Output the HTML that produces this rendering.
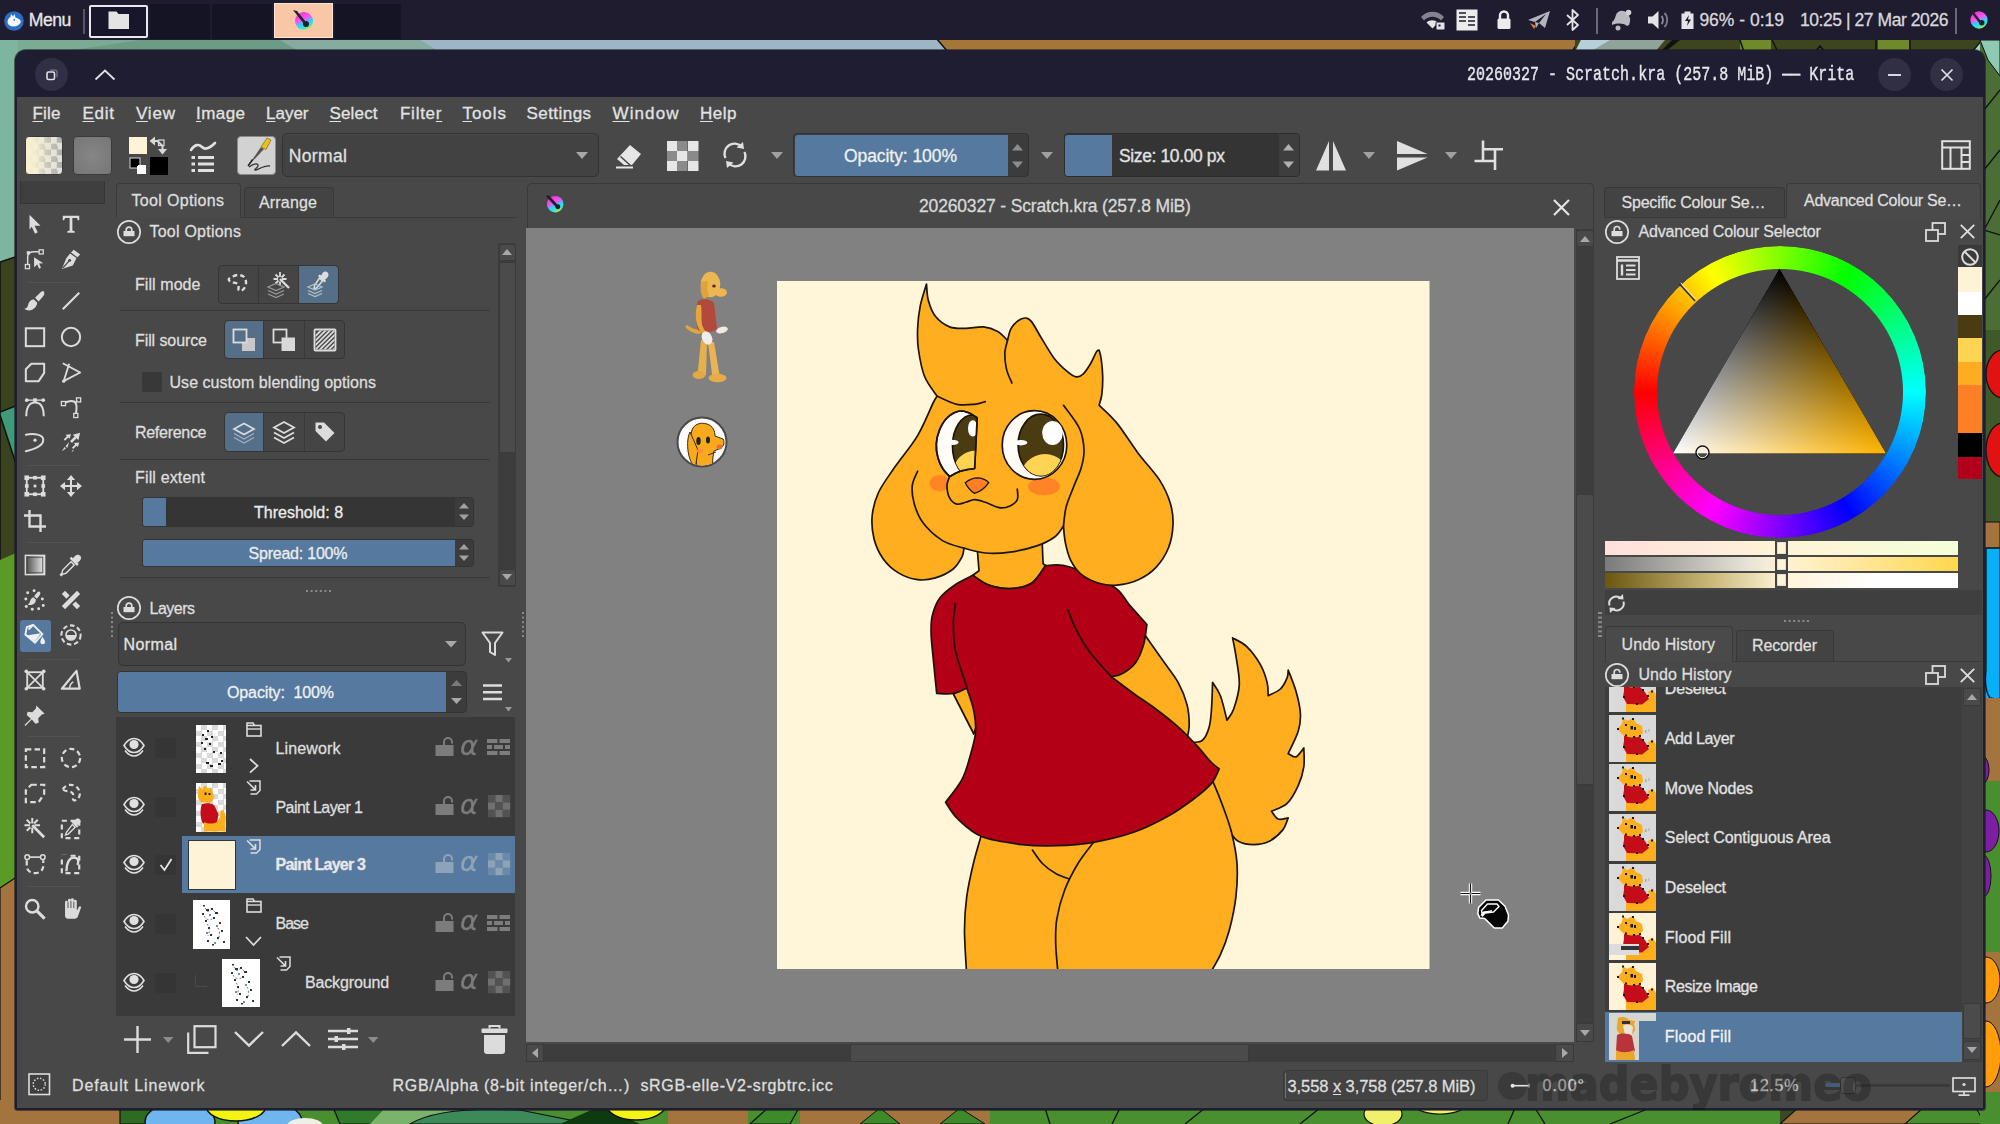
<!DOCTYPE html>
<html lang="en">
<head>
<meta charset="utf-8">
<title>Krita</title>
<style>
*{box-sizing:border-box;margin:0;padding:0}
html,body{width:2000px;height:1124px;overflow:hidden;background:#3c4a22}
body{position:relative;font-family:"Liberation Sans",sans-serif;font-size:16px;color:#dcdcdc;-webkit-font-smoothing:antialiased}
.abs{position:absolute}
.t{position:absolute;white-space:nowrap;line-height:20px;color:#dedede;-webkit-text-stroke:.3px currentColor}
svg{position:absolute;overflow:visible}
#panel{position:absolute;left:0;top:0;width:2000px;height:40px;background:#1e1c2e}
#win{position:absolute;left:15px;top:50px;width:1970px;height:1060px;background:#484848;border-radius:11px 11px 3px 3px;overflow:hidden;box-shadow:0 0 0 1px rgba(20,20,30,.55)}
#titlebar{position:absolute;left:0;top:0;width:100%;height:47px;background:#1e1d31}
.btn{position:absolute;border-radius:3px}
.sep{position:absolute;height:1px;background:#3a3a3a}
.sel{background:#56799f}
</style>
</head>
<body>
<!-- desktop wallpaper -->
<svg id="wall" width="2000" height="1124" viewBox="0 0 2000 1124" style="left:0;top:0">
  <rect x="0" y="0" width="2000" height="1124" fill="#3c4a22"/>
  <!-- top strip -->
  <rect x="0" y="38" width="430" height="14" fill="#7aab93"/>
  <polygon points="60,52 140,40 300,40 430,52" fill="#6d9c86"/>
  <rect x="420" y="38" width="525" height="14" fill="#9db5c5"/>
  <polygon points="280,40 420,40 440,52 300,52" fill="#86ac9f"/>
  <polygon points="936,38 1580,38 1572,52 948,52" fill="#a47638" stroke="#111" stroke-width="1.5"/>
  <rect x="1575" y="38" width="425" height="14" fill="#3d451f"/>
  <polygon points="1575,52 1581,40 1665,40 1655,52" fill="#8fa39a"/>
  <polygon points="1575,52 1581,40 1610,40 1590,52" fill="#b5d0d8"/>
  <polygon points="1660,52 1672,40 1680,40 1665,52" fill="#111"/>
  <rect x="1740" y="38" width="31" height="14" fill="#6f8a2a"/>
  <rect x="1878" y="38" width="31" height="14" fill="#6f8a2a"/>
  <path d="M1740 40l4 12M1772 40l6 12M1815 52l5-6 5 6M1876 40v12M1910 40v12" stroke="#111" stroke-width="1.500" fill="none"/>
  <polygon points="1972,52 1982,40 2000,40 2000,52" fill="#9fd6c8" stroke="#111" stroke-width="1.200"/>
  <!-- left strip -->
  <rect x="0" y="40" width="18" height="225" fill="#7eb5a0"/>
  <polygon points="0,262 18,256 18,560 0,568" fill="#3a431f" stroke="#111" stroke-width="1.5"/>
  <polygon points="0,412 18,405 18,470 0,415" fill="#3f9a78" stroke="#111" stroke-width="1.5"/>
  <polygon points="0,560 18,552 18,878 0,890" fill="#5a9b27"/>
  <polygon points="0,888 18,876 18,1124 0,1124" fill="#a3743e" stroke="#111" stroke-width="1.2"/>
  <!-- bottom strip -->
  <rect x="0" y="1100" width="125" height="24" fill="#a3743e"/>
  <rect x="120" y="1100" width="1660" height="24" fill="#4a8f2f"/>
  <polygon points="120,1100 165,1100 185,1124 120,1124" fill="#2d6b22" stroke="#111" stroke-width="1.2"/>
  <ellipse cx="180" cy="1122" rx="35" ry="20" fill="#6fb5f0" stroke="#111" stroke-width="1.5"/>
  <ellipse cx="270" cy="1122" rx="32" ry="20" fill="#6fb5f0" stroke="#111" stroke-width="1.5"/>
  <ellipse cx="236" cy="1106" rx="30" ry="15" fill="#f4f414" stroke="#111" stroke-width="1.5"/>
  <ellipse cx="305" cy="1126" rx="18" ry="8" fill="#eef0e6"/>
  <polygon points="330,1100 420,1100 470,1124 340,1124" fill="#2f7a2b" stroke="#111" stroke-width="1.2"/>
  <polygon points="370,1124 385,1108 470,1108 500,1124" fill="#7ab36b"/>
  <path d="M410 1124 Q440 1106 520 1110 L590 1124Z" fill="#3c8a58" stroke="#111" stroke-width="1.2"/>
  <polygon points="560,1124 600,1106 640,1124" fill="#0e3a10"/>
  <ellipse cx="636" cy="1104" rx="30" ry="16" fill="#f4f414" stroke="#111" stroke-width="1.5"/>
  <rect x="668" y="1108" width="80" height="16" fill="#a3743e"/>
  <polygon points="750,1124 770,1106 800,1106 790,1124" fill="#3d8a2a" stroke="#111" stroke-width="1.2"/>
  <rect x="800" y="1108" width="200" height="16" fill="#a3743e"/>
  <polygon points="860,1124 880,1108 900,1124" fill="#3d8a2a" stroke="#111"/>
  <polygon points="940,1124 960,1108 985,1124" fill="#3d8a2a" stroke="#111"/>
  <rect x="990" y="1108" width="790" height="16" fill="#4a8f2f"/>
  <g stroke="#111" stroke-width="1.3" fill="none">
    <path d="M1045 1108 L1050 1124M1120 1108 L1112 1124M1205 1108 L1185 1124M1300 1124 L1320 1108M1508 1124 L1515 1108M1535 1108 L1545 1124M1610 1124 L1650 1108"/>
  </g>
  <ellipse cx="1383" cy="1114" rx="19" ry="12" fill="#f0f06a" stroke="#111" stroke-width="1.2"/>
  <ellipse cx="1440" cy="1106" rx="24" ry="8" fill="#f0f06a" stroke="#111" stroke-width="1.2"/>
  <polygon points="1780,1124 1800,1106 2000,1106 2000,1124" fill="#a3743e" stroke="#111" stroke-width="1.2"/>
  <polygon points="1905,1124 1925,1106 1975,1106 1985,1124" fill="#4a8f2f" stroke="#111" stroke-width="1.2"/>
  <!-- right strip -->
  <rect x="1980" y="40" width="20" height="300" fill="#4a6e35"/>
  <polygon points="1980,40 2000,40 2000,76 1988,60" fill="#8fc9b4" stroke="#111"/>
  <g stroke="#111" stroke-width="1.3" fill="none"><path d="M1984 110 L2000 90M1984 170 L2000 150M2000 200 L1984 230 L2000 235M1984 300 L2000 280"/></g>
  <rect x="1980" y="330" width="20" height="200" fill="#3f5a28"/>
  <ellipse cx="2003" cy="374" rx="17" ry="24" fill="#e01212" stroke="#111" stroke-width="1.3"/>
  <ellipse cx="2003" cy="450" rx="17" ry="27" fill="#e01212" stroke="#111" stroke-width="1.3"/>
  <rect x="1980" y="522" width="20" height="30" fill="#a3743e" stroke="#111"/>
  <rect x="1980" y="548" width="20" height="150" fill="#08b0f8"/>
  <path d="M1986 548 L2000 548 L2000 700 L1990 698 Q1984 690 1986 670Z" fill="#08b0f8" stroke="#111" stroke-width="1.3"/>
  <rect x="1980" y="698" width="20" height="85" fill="#a3743e"/>
  <rect x="1980" y="781" width="20" height="175" fill="#4a8f2f"/>
  <ellipse cx="1982" cy="770" rx="7" ry="14" fill="#7d1fa0" stroke="#111"/>
  <ellipse cx="1986" cy="831" rx="13" ry="21" fill="#7d1fa0" stroke="#111"/>
  <ellipse cx="1983" cy="876" rx="8" ry="21" fill="#7d1fa0" stroke="#111"/>
  <rect x="1980" y="952" width="20" height="142" fill="#a3743e"/>
  <ellipse cx="1986" cy="980" rx="14" ry="23" fill="#ff9d0a" stroke="#111"/>
  <ellipse cx="1986" cy="1054" rx="15" ry="33" fill="#ff9d0a" stroke="#111"/>
  <rect x="1980" y="1092" width="20" height="32" fill="#4a8f2f"/>
</svg>
<!-- top desktop panel -->
<div id="panel">
  <svg width="22" height="22" viewBox="0 0 22 22" style="left:3.400px;top:9.500px">
    <circle cx="11" cy="11" r="9.800" fill="#2b6cc4"/>
    <path d="M4.500 12.500c0-3 1.500-5 3-5.500l.5-3 2 2.500c.5-.8 1-1.800 1.500-2.500l1 3.500c3 .5 5 2.500 5.500 4.500-1.500 3-4.500 4.500-7.500 4.500s-5.500-1.500-6-4z" fill="#f6f8fc"/>
    <circle cx="11.300" cy="9.800" r=".9" fill="#2b6cc4"/>
  </svg>
  <div class="t" style="left:28.8px;top:10.3px;font-size:17.6px;letter-spacing:-0.54px;line-height:20px;color:#e6e6ea;">Menu</div>
  <div class="abs" style="left:82.500px;top:9px;width:2px;height:25px;background:#55546a"></div>
  <div class="abs" style="left:89px;top:5px;width:59px;height:33px;border:2px solid #e8e8ee;background:#17162a;border-radius:2px"></div>
  <svg width="22" height="20" viewBox="0 0 22 20" style="left:108px;top:10px"><path d="M0.5 1.5h8l2 2.5h10.5v15h-20.500z" fill="#e4e4e4"/></svg>
  <div class="abs" style="left:150px;top:4px;width:60px;height:35px;background:#151425"></div>
  <div class="abs" style="left:212px;top:4px;width:60px;height:35px;background:#151425"></div>
  <div class="abs" style="left:274px;top:3px;width:59px;height:35px;background:#f9c6a6;border:1px solid #fde6d8"></div>
  <div class="abs" style="left:335px;top:4px;width:66px;height:35px;background:#151425"></div>
  <svg width="22" height="22" viewBox="0 0 22 22" style="left:292px;top:9px">
    <defs><linearGradient id="kg1" x1="0.300" y1="0" x2="0.750" y2="1"><stop offset="0" stop-color="#ff2ad4"/><stop offset=".42" stop-color="#e860f0"/><stop offset=".6" stop-color="#30d0ff"/><stop offset=".8" stop-color="#30e8d0"/><stop offset="1" stop-color="#f4e020"/></linearGradient></defs>
    <circle cx="12" cy="12" r="9" fill="url(#kg1)"/><circle cx="14" cy="15" r="3" fill="#222"/>
    <path d="M1 1l4 1 9 11-2 2z" fill="#2a2233"/>
  </svg>
  <!-- tray -->
  <svg width="26" height="22" viewBox="0 0 26 22" style="left:1420px;top:9px">
    <path d="M1 8c6-7 17-7 23 0l-3 3.500c-5-5-12-5-17 0z" fill="#84838f"/>
    <path d="M6.500 13.500c3-3 8-3 11.500 0l-5.500 6z" fill="#e4e4e8"/>
    <rect x="16" y="13" width="9" height="8" rx="1" fill="#e4e4e8" stroke="#1b1a2e" stroke-width="1"/><rect x="18.500" y="15.500" width="2" height="2" fill="#1b1a2e"/>
  </svg>
  <svg width="22" height="22" viewBox="0 0 22 22" style="left:1456px;top:9px">
    <rect x="0.500" y="0.500" width="21" height="21" fill="#ececec"/>
    <path d="M3 4h7M3 8h7M3 12h7M12 8h7M12 12h7M12 16h7" stroke="#1b1a2e" stroke-width="1.600"/>
  </svg>
  <svg width="16" height="20" viewBox="0 0 16 20" style="left:1496px;top:10px">
    <path d="M4 9v-3.500a4 4 0 0 1 8 0v3.500" fill="none" stroke="#ececec" stroke-width="2.400"/><rect x="1.500" y="8.500" width="13" height="10.500" rx="1.500" fill="#ececec"/>
  </svg>
  <svg width="24" height="20" viewBox="0 0 24 20" style="left:1527px;top:10px">
    <path d="M1 10l22-9-5 17-6-5-3 5-1-6z" fill="#b4b4bc"/><path d="M8 12l11-8-7 9z" fill="#1b1a2e"/><path d="M3 13l6 3-2 3z" fill="#e07a3a"/>
  </svg>
  <svg width="16" height="22" viewBox="0 0 16 22" style="left:1565px;top:9px">
    <path d="M2 6l11 10-5.500 5v-20l5.500 5-11 10" fill="none" stroke="#e4e4e8" stroke-width="1.800" stroke-linejoin="round"/>
  </svg>
  <div class="abs" style="left:1596px;top:8px;width:2px;height:26px;background:#6a697a"></div>
  <svg width="24" height="22" viewBox="0 0 24 22" style="left:1609px;top:9px">
    <path d="M3 13c2-1 3-4 4-7 1-4 7-6 11-2l3-1-1 4c2 3 1 6 0 9l-2 1c-4-3-9-3-15-1z" fill="#b9b9c1"/><circle cx="9" cy="19" r="2.500" fill="#b9b9c1"/><circle cx="19.500" cy="3.500" r="2.800" fill="#d0d0d6"/>
  </svg>
  <svg width="22" height="20" viewBox="0 0 22 20" style="left:1647px;top:10px">
    <path d="M1 6.500h4.500l6-5.500v18l-6-5.500h-4.500z" fill="#e4e4e8"/><path d="M14.500 6c2 2 2 6 0 8" fill="none" stroke="#8d8c99" stroke-width="1.800"/><path d="M17.500 3c3.500 3.500 3.500 10.500 0 14" fill="none" stroke="#7d7c8c" stroke-width="1.800"/>
  </svg>
  <svg width="16" height="20" viewBox="0 0 16 20" style="left:1680px;top:10px">
    <path d="M1.500 3.500h3v-2h6v2h3v15.500h-12z" fill="#e4e4e8"/><path d="M9 5l-4 6h3l-1 5 4-6.500h-3z" fill="#1b1a2e"/>
  </svg>
  <div class="t" style="left:1699.4px;top:10.3px;font-size:17.5px;letter-spacing:0px;line-height:20px;color:#d8d8de;">96% - 0:19</div>
  <div class="t" style="left:1800px;top:10.3px;font-size:17.5px;letter-spacing:-0.44px;line-height:20px;color:#d8d8de;">10:25 | 27 Mar 2026</div>
  <div class="abs" style="left:1955px;top:8px;width:2px;height:26px;background:#6a697a"></div>
  <svg width="20" height="20" viewBox="0 0 22 22" style="left:1969px;top:10px">
    <circle cx="11" cy="11" r="9.500" fill="url(#kg1)"/><circle cx="14" cy="14" r="3" fill="#222"/><path d="M1 1l4 1 8 10-2 2z" fill="#2a2233"/>
  </svg>
</div>
<div id="win">
<div id="titlebar">
  <div class="abs" style="left:20px;top:8px;width:33px;height:33px;border-radius:50%;background:#312f43"></div>
  <svg width="16" height="16" viewBox="0 0 16 16" style="left:29px;top:17px"><rect x="3" y="5" width="7.500" height="7.500" rx="1.500" fill="none" stroke="#e0e0e6" stroke-width="1.600"/><path d="M6 3.200h5.500a1.500 1.500 0 0 1 1.500 1.500v5.500" fill="none" stroke="#77768a" stroke-width="1.300"/></svg>
  <svg width="22" height="12" viewBox="0 0 22 12" style="left:79px;top:19px"><path d="M1.500 10.500l9.500-9 9.500 9" fill="none" stroke="#e0e0e6" stroke-width="1.800"/></svg>
  <div class="t" id="wtitle" style="left:1451.500px;top:11.500px;line-height:26px;font-family:'Liberation Mono',monospace;font-size:21px;font-weight:400;color:#e6e6ec;-webkit-text-stroke:.4px #e6e6ec;transform-origin:0 50%;transform:scaleX(.7147);white-space:pre">20260327 - Scratch.kra (257.8 MiB) —— Krita</div>
  <div class="abs" style="left:1863px;top:8px;width:33px;height:33px;border-radius:50%;background:#312f43"></div>
  <div class="abs" style="left:1873px;top:24px;width:13px;height:2px;background:#d8d8de"></div>
  <div class="abs" style="left:1915px;top:8px;width:33px;height:33px;border-radius:50%;background:#312f43"></div>
  <svg width="14" height="14" viewBox="0 0 14 14" style="left:1925px;top:17.500px"><path d="M1.500 1.500l11 11M12.500 1.500l-11 11" stroke="#e0e0e6" stroke-width="1.700"/></svg>
</div>
<div class="abs" style="left:0;top:47px;width:2px;height:1013px;background:#1e1d31"></div>
<div class="abs" style="right:0;top:47px;width:2px;height:1013px;background:#1e1d31"></div>
<div class="abs" style="left:0;bottom:0;width:100%;height:2px;background:#1e1d31"></div>
<div id="w" class="abs" style="left:-15px;top:-50px;width:2000px;height:1124px">
<div class="t" style="left:32.5px;top:103.5px;font-size:17px;letter-spacing:0.2px;line-height:20px;color:#e2e2e2;text-underline-offset:2px"><u>F</u>ile</div>
<div class="t" style="left:82.5px;top:103.5px;font-size:17px;letter-spacing:0.74px;line-height:20px;color:#e2e2e2;text-underline-offset:2px"><u>E</u>dit</div>
<div class="t" style="left:136px;top:103.5px;font-size:17px;letter-spacing:0.82px;line-height:20px;color:#e2e2e2;text-underline-offset:2px"><u>V</u>iew</div>
<div class="t" style="left:196px;top:103.5px;font-size:17px;letter-spacing:0.44px;line-height:20px;color:#e2e2e2;text-underline-offset:2px"><u>I</u>mage</div>
<div class="t" style="left:266px;top:103.5px;font-size:17px;letter-spacing:-0.01px;line-height:20px;color:#e2e2e2;text-underline-offset:2px"><u>L</u>ayer</div>
<div class="t" style="left:329.5px;top:103.5px;font-size:17px;letter-spacing:0.15px;line-height:20px;color:#e2e2e2;text-underline-offset:2px"><u>S</u>elect</div>
<div class="t" style="left:400px;top:103.5px;font-size:17px;letter-spacing:0.74px;line-height:20px;color:#e2e2e2;text-underline-offset:2px">Filte<u>r</u></div>
<div class="t" style="left:462.5px;top:103.5px;font-size:17px;letter-spacing:0.95px;line-height:20px;color:#e2e2e2;text-underline-offset:2px"><u>T</u>ools</div>
<div class="t" style="left:526.5px;top:103.5px;font-size:17px;letter-spacing:0.44px;line-height:20px;color:#e2e2e2;text-underline-offset:2px">Setti<u>n</u>gs</div>
<div class="t" style="left:612.5px;top:103.5px;font-size:17px;letter-spacing:1.11px;line-height:20px;color:#e2e2e2;text-underline-offset:2px"><u>W</u>indow</div>
<div class="t" style="left:700px;top:103.5px;font-size:17px;letter-spacing:0.51px;line-height:20px;color:#e2e2e2;text-underline-offset:2px"><u>H</u>elp</div>
<div class="abs" style="left:24.5px;top:135.5px;width:38.5px;height:39px;background:#e9e2c8;border-radius:4px;background-image:linear-gradient(90deg,#f8f1d2 0%,rgba(248,241,210,.92) 25%,rgba(248,241,210,.45) 60%,rgba(248,241,210,.12) 100%),repeating-conic-gradient(#a4a4a4 0 25%,#dedede 0 50%);background-size:100% 100%,12.500px 12.500px;border:1px solid #3a3a3a"></div>
<div class="abs" style="left:73px;top:135.5px;width:38.5px;height:39px;background:#7f7f7f;border-radius:4px;border:1px solid #3a3a3a;background-image:radial-gradient(circle at 50% 50%,#868686,#767676)"></div>
<div class="abs" style="left:149.5px;top:156.5px;width:18px;height:18px;background:#000;"></div>
<div class="abs" style="left:128.5px;top:136.5px;width:18px;height:17.5px;background:#fff3d7;"></div>
<svg width="18" height="18" viewBox="0 0 18 18" style="left:129px;top:157px;"><rect x="1" y="1" width="10" height="10" fill="#000" stroke="#d8d8d8" stroke-width="1"/><rect x="8" y="8" width="9" height="9" fill="#fff"/><rect x="2" y="2" width="7" height="7" fill="#000"/></svg>
<svg width="19" height="19" viewBox="0 0 19 19" style="left:149px;top:136px;"><path d="M0.500 5l5.500-4.500v9z" fill="#d8d8d8"/><path d="M13.500 18.500l-4.500-5.500h9z" fill="#d8d8d8"/><path d="M5 5h3.500l5 5v3.500" fill="none" stroke="#d8d8d8" stroke-width="2"/><rect x="8" y="5" width="5.500" height="5.500" fill="none" stroke="#d8d8d8" stroke-width="1.200" transform="translate(1.500 -1)"/></svg>
<svg width="30" height="34" viewBox="0 0 30 34" style="left:189px;top:139px;"><path d="M2 11c4-6 8-6 11-3s7 2 13-4" fill="none" stroke="#e0e0e0" stroke-width="2.600" stroke-linecap="round"/><path d="M9 18.500h16M9 25h16M9 31.500h16" stroke="#e0e0e0" stroke-width="2.800"/><path d="M2.500 18.500h3.500M2.500 25h3.500M2.500 31.500h3.500" stroke="#e0e0e0" stroke-width="2.800"/></svg>
<div class="abs" style="left:237px;top:135.5px;width:38.5px;height:39px;background:#d2d2d2;border-radius:4px;border:1px solid #8a8a8a"></div>
<svg width="38.5" height="39" viewBox="0 0 38.5 39" style="left:237px;top:135.5px;"><path d="M12 31c4-3 8-4 9-2s-4 4-3 5 9-5 15-4" fill="none" stroke="#333" stroke-width="1.300"/><path d="M11 30l13-19 3 2z" fill="#555"/><path d="M24 11l6-9 4 2-5 9.500z" fill="#e8c21a" stroke="#8a7410" stroke-width=".8"/><path d="M11 30l4.500-6.500" stroke="#222" stroke-width="1.400"/></svg>
<div class="abs" style="left:282px;top:133px;width:316.5px;height:43.5px;background:#424242;border-radius:5px;border:1.500px solid #323232;box-shadow:inset 0 1px 0 rgba(255,255,255,.04)"></div>
<div class="t" style="left:288.7px;top:146.3px;font-size:17.5px;letter-spacing:0.38px;line-height:20px;color:#e0e0e0;">Normal</div>
<svg width="12" height="7" viewBox="0 0 12 7" style="left:576px;top:152px;"><path d="M0 0h12l-6 7z" fill="#a8a8a8"/></svg>
<svg width="30" height="30" viewBox="0 0 30 30" style="left:614px;top:140px;"><path d="M3 19l13-14 11 9-9 11h-8z" fill="#e6e6e6"/><path d="M2 27.500h17" stroke="#e6e6e6" stroke-width="2.200"/><path d="M6.500 16.500l10 9" stroke="#484848" stroke-width="1.600"/></svg>
<svg width="31.5" height="30" viewBox="0 0 31.5 30" style="left:667px;top:140.5px;"><rect x="0" y="0" width="10.500" height="10" fill="#e6e6e6"/><rect x="10" y="0" width="10.500" height="10" fill="#8a8a8a"/><rect x="21" y="0" width="10.500" height="10" fill="#e6e6e6"/><rect x="0" y="10" width="10.500" height="10" fill="#8a8a8a"/><rect x="10" y="10" width="10.500" height="10" fill="#e6e6e6"/><rect x="21" y="10" width="10.500" height="10" fill="#8a8a8a"/><rect x="0" y="20" width="10.500" height="10" fill="#e6e6e6"/><rect x="10" y="20" width="10.500" height="10" fill="#8a8a8a"/><rect x="21" y="20" width="10.500" height="10" fill="#e6e6e6"/></svg>
<svg width="28" height="28" viewBox="0 0 28 28" style="left:721px;top:141px;"><path d="M4.500 17a10 10 0 0 1 16-11.500" fill="none" stroke="#e0e0e0" stroke-width="2.400"/><path d="M23.500 11a10 10 0 0 1-16 11.500" fill="none" stroke="#e0e0e0" stroke-width="2.400"/><path d="M15.500 6.500l7.500 1.500-1-7z" fill="#e0e0e0"/><path d="M12.500 21.500l-7.500-1.500 1 7z" fill="#e0e0e0"/></svg>
<svg width="12" height="7" viewBox="0 0 12 7" style="left:770.5px;top:152px;"><path d="M0 0h12l-6 7z" fill="#a0a0a0"/></svg>
<div class="abs" style="left:793px;top:133px;width:236px;height:43.5px;background:#3c3c3c;border-radius:4px;border:1px solid #333"></div>
<div class="abs" style="left:794.5px;top:134.5px;width:213px;height:41px;background:#56799f;border-radius:3px 0 0 3px"></div>
<div class="t" style="left:844px;top:146.3px;font-size:17.5px;letter-spacing:-0.07px;line-height:20px;color:#f0f0f0;">Opacity: 100%</div>
<svg width="11" height="24" viewBox="0 0 11 24" style="left:1012px;top:144px;"><path d="M0 6.500l5.500-6.500 5.500 6.500zM0 17.500l5.500 6.500 5.500-6.500z" fill="#8c8c8c"/></svg>
<svg width="12" height="7" viewBox="0 0 12 7" style="left:1041px;top:152px;"><path d="M0 0h12l-6 7z" fill="#a0a0a0"/></svg>
<div class="abs" style="left:1063.5px;top:133px;width:236.5px;height:43.5px;background:#343434;border-radius:4px;border:1px solid #2e2e2e"></div>
<div class="abs" style="left:1065px;top:134.5px;width:46.5px;height:41px;background:#56799f;border-radius:3px 0 0 3px"></div>
<div class="abs" style="left:1279px;top:134px;width:20px;height:41.5px;background:#3e3e3e;border-radius:0 3px 3px 0"></div>
<div class="t" style="left:1119px;top:146.3px;font-size:17.5px;letter-spacing:-0.38px;line-height:20px;color:#e4e4e4;">Size: 10.00 px</div>
<svg width="11" height="24" viewBox="0 0 11 24" style="left:1283px;top:144px;"><path d="M0 6.500l5.500-6.500 5.500 6.500zM0 17.500l5.500 6.500 5.500-6.500z" fill="#b0b0b0"/></svg>
<svg width="30" height="29.5" viewBox="0 0 30 29.5" style="left:1316px;top:140.5px;"><path d="M13 0v29.500h-13zM17 0v29.500h13z" fill="#e0e0e0"/></svg>
<svg width="12" height="7" viewBox="0 0 12 7" style="left:1363px;top:152px;"><path d="M0 0h12l-6 7z" fill="#a0a0a0"/></svg>
<svg width="30.5" height="29.5" viewBox="0 0 30.5 29.5" style="left:1397px;top:140.5px;"><path d="M0 0l30.500 13h-30.500zM0 29.500l30.500-13h-30.500z" fill="#e0e0e0"/></svg>
<svg width="12" height="7" viewBox="0 0 12 7" style="left:1445px;top:152px;"><path d="M0 0h12l-6 7z" fill="#a0a0a0"/></svg>
<svg width="2000" height="200" viewBox="0 0 2000 200" style="left:0;top:0"><path d="M1483 140.500V162.300M1474.500 161H1496.300M1483 149.300H1503M1495 149.300V170" fill="none" stroke="#e0e0e0" stroke-width="2.600"/></svg>
<svg width="30" height="30" viewBox="0 0 30 30" style="left:1941px;top:140px;"><rect x="1.200" y="1.200" width="27.600" height="27.600" fill="none" stroke="#e0e0e0" stroke-width="2"/><path d="M1 7.500h28M9.500 7.500v22M20.500 7.500v22M20.500 15h8.500M20.500 22h8.500" stroke="#e0e0e0" stroke-width="2" fill="none"/></svg>
<div class="abs" style="left:20px;top:181px;width:85px;height:22.5px;background:#3f3f3f;border:1px solid #353535;border-top:none"></div>
<div class="abs" style="left:19.5px;top:619.5px;width:31.5px;height:32px;background:#56799f;border-radius:3px"></div>
<svg width="22" height="22" viewBox="0 0 24 24" style="left:24px;top:212.5px;"><path d="M6 2l12 12h-6.500l3.500 7-3 1.500-3.500-7.500-2.500 3z" fill="#dcdcdc"/></svg>
<svg width="22" height="22" viewBox="0 0 24 24" style="left:59.5px;top:212.5px;"><path d="M3 3h18v5h-1.500l-1-2.500h-5v13.500l2.500 1v1.500h-8v-1.500l2.500-1v-13.500h-5l-1 2.500h-1.500z" fill="#dcdcdc"/></svg>
<svg width="22" height="22" viewBox="0 0 24 24" style="left:24px;top:247.5px;"><path d="M4 20v-10c0-4 3-6 7-6h7" fill="none" stroke="#dcdcdc" stroke-width="1.6"/><rect x="1.500" y="18" width="4.500" height="4.500" fill="#484848" stroke="#dcdcdc" stroke-width="1.400"/><rect x="16.500" y="2" width="4.500" height="4.500" fill="#484848" stroke="#dcdcdc" stroke-width="1.400"/><rect x="3" y="3.500" width="3.500" height="3.500" fill="#dcdcdc"/><path d="M11 10l10 6.500-4.500.5 2 4.500-2 1-2-4.500-3.500 3z" fill="#dcdcdc"/></svg>
<svg width="22" height="22" viewBox="0 0 24 24" style="left:59.5px;top:247.5px;"><path d="M15 2l7 5-3 3-7-5z" fill="#dcdcdc"/><path d="M11 6l7 5-4 8-12 4 5-12z" fill="#dcdcdc"/><path d="M3 22l7-8" stroke="#484848" stroke-width="1.400"/><circle cx="10.500" cy="13.500" r="1.600" fill="#484848"/></svg>
<svg width="22" height="22" viewBox="0 0 24 24" style="left:24px;top:290px;"><path d="M21.500 1.500c1.500 1.500.5 4-1.500 6.500l-4 4.500-4-4 4.500-4.500c2.500-2.500 4-3.500 5-2.500z" fill="#dcdcdc"/><path d="M10.500 10l4 4c-.5 3-2 6-5.500 7.500s-6.500.5-8.500-1c2.500-.5 3.500-2 4-4.500s2.500-5.500 6-6z" fill="#dcdcdc"/></svg>
<svg width="22" height="22" viewBox="0 0 24 24" style="left:59.5px;top:290px;"><path d="M3 21l18-18" fill="none" stroke="#dcdcdc" stroke-width="2.4"/></svg>
<svg width="22" height="22" viewBox="0 0 24 24" style="left:24px;top:325.5px;"><rect x="2" y="2.500" width="20" height="19.500" fill="none" stroke="#dcdcdc" stroke-width="2.2"/></svg>
<svg width="22" height="22" viewBox="0 0 24 24" style="left:59.5px;top:325.5px;"><circle cx="12" cy="12" r="10" fill="none" stroke="#dcdcdc" stroke-width="2.2"/></svg>
<svg width="22" height="22" viewBox="0 0 24 24" style="left:24px;top:361px;"><path d="M8 3h14v10l-6 9h-14v-13z" fill="none" stroke="#dcdcdc" stroke-width="2.2" stroke-linejoin="round"/></svg>
<svg width="22" height="22" viewBox="0 0 24 24" style="left:59.5px;top:361px;"><path d="M3 2.500l19 10-18 9.500 6-19" fill="none" stroke="#dcdcdc" stroke-width="2" stroke-linejoin="round"/><circle cx="4" cy="22" r="1.800" fill="#dcdcdc"/></svg>
<svg width="22" height="22" viewBox="0 0 24 24" style="left:24px;top:396px;"><path d="M2.500 22c0-9 3-15 9.500-15s9.500 6 9.500 15" fill="none" stroke="#dcdcdc" stroke-width="2.2"/><path d="M3 4.500h18" fill="none" stroke="#dcdcdc" stroke-width="1.4"/><circle cx="3" cy="4.500" r="2" fill="#dcdcdc"/><circle cx="21" cy="4.500" r="2" fill="#dcdcdc"/><rect x="10" y="2.500" width="4" height="4" fill="#dcdcdc"/></svg>
<svg width="22" height="22" viewBox="0 0 24 24" style="left:59.5px;top:396px;"><path d="M4 8.500c5-4 12-4 13.500 0s0 6 0 12" fill="none" stroke="#dcdcdc" stroke-width="2.2"/><rect x="1.500" y="6" width="4.500" height="4.500" fill="#484848" stroke="#dcdcdc" stroke-width="1.400"/><rect x="15" y="19" width="4.500" height="4.500" fill="#484848" stroke="#dcdcdc" stroke-width="1.400"/><rect x="18" y="2" width="4.500" height="4.500" fill="#484848" stroke="#dcdcdc" stroke-width="1.400"/><path d="M17 6.500l2-1.500" fill="none" stroke="#dcdcdc" stroke-width="1.2"/></svg>
<svg width="22" height="22" viewBox="0 0 24 24" style="left:24px;top:431px;"><path d="M2 4c9-2 19 0 19 5.500s-8 10-19 12.500" fill="none" stroke="#dcdcdc" stroke-width="2.2" stroke-linecap="round"/><circle cx="12" cy="10" r="1.800" fill="#dcdcdc"/></svg>
<svg width="22" height="22" viewBox="0 0 24 24" style="left:59.5px;top:431px;"><path d="M22 2l-2 8-2-2-5 5-2-2 5-5-2-2z" fill="#dcdcdc"/><path d="M12 3.500l-1.500 5-1.500-1.300-3.500 3.500-1.500-1.500 3.500-3.500-1.300-1.500zM21 12.500l-1.500 5-1.500-1.300-3.500 3.500-1.500-1.500 3.500-3.500-1.300-1.500z" fill="#dcdcdc"/><path d="M10 12l-4 4.500 2 2zM5 17.500l-3 4.500 4.500-3z" fill="#dcdcdc"/><path d="M14 20.500l-1.500 2.500 2.500-1.500z" fill="#dcdcdc"/></svg>
<svg width="22" height="22" viewBox="0 0 24 24" style="left:24px;top:475px;"><rect x="3" y="3" width="18" height="18" fill="none" stroke="#dcdcdc" stroke-width="2"/><g fill="#dcdcdc"><rect x="0.500" y="0.500" width="5" height="5"/><rect x="18.500" y="0.500" width="5" height="5"/><rect x="0.500" y="18.500" width="5" height="5"/><rect x="18.500" y="18.500" width="5" height="5"/><rect x="10" y="1" width="4" height="4"/><rect x="10" y="19" width="4" height="4"/><rect x="1" y="10" width="4" height="4"/><rect x="19" y="10" width="4" height="4"/><rect x="10.500" y="10.500" width="3" height="3"/></g></svg>
<svg width="22" height="22" viewBox="0 0 24 24" style="left:59.5px;top:475px;"><path d="M12 2v20M2 12h20" fill="none" stroke="#dcdcdc" stroke-width="2.2"/><path d="M12 0l4.500 5.500h-9zM12 24l4.500-5.500h-9zM0 12l5.500-4.500v9zM24 12l-5.500-4.500v9z" fill="#dcdcdc"/></svg>
<svg width="22" height="22" viewBox="0 0 24 24" style="left:24px;top:510px;"><path d="M6 0v18h18M0 6h18v18" fill="none" stroke="#dcdcdc" stroke-width="2.6"/></svg>
<svg width="22" height="22" viewBox="0 0 24 24" style="left:24px;top:553.5px;"><defs><linearGradient id="tg" x1="0" x2="1"><stop offset="0" stop-color="#484848"/><stop offset="1" stop-color="#f0f0f0"/></linearGradient></defs><rect x="1.500" y="1.500" width="21" height="21" fill="url(#tg)" stroke="#dcdcdc" stroke-width="1.600"/><rect x="3.500" y="3.500" width="17" height="17" fill="none" stroke="#484848" stroke-width="1"/></svg>
<svg width="22" height="22" viewBox="0 0 24 24" style="left:59.5px;top:553.5px;"><path d="M17 1.500c2-1.500 4.500-.5 5.500 1s.5 3.500-1 5l-2.500 2 1.500 1.500-2 2-8-8 2-2 1.500 1.500z" fill="#dcdcdc"/><path d="M12 8.500l3.500 3.500-9 9-3.500 1-1.500 1.500-1-1 1.500-1.500 1-3.500z" fill="none" stroke="#dcdcdc" stroke-width="1.600"/></svg>
<svg width="22" height="22" viewBox="0 0 24 24" style="left:24px;top:588.5px;"><path d="M17 3c1.500 1 1 2.500-.5 4.500l-2.500 3-3-2.500 2.500-3c1.500-2 2.500-2.500 3.500-2z" fill="#dcdcdc"/><path d="M10 9l3 2.500c0 2.500-1 4.500-3.500 5.500s-4.500.5-5.500-.5c1.500-.5 2-1.500 2.500-3s1.500-4 3.500-4.500z" fill="#dcdcdc"/><g fill="#dcdcdc"><circle cx="4" cy="4" r="1.600"/><circle cx="11" cy="2" r="1.600"/><circle cx="2" cy="11" r="1.600"/><circle cx="20" cy="11" r="1.600"/><circle cx="21" cy="18" r="1.600"/><circle cx="16" cy="21.500" r="1.600"/><circle cx="9" cy="22" r="1.600"/><circle cx="2.500" cy="19" r="1.600"/></g></svg>
<svg width="22" height="22" viewBox="0 0 24 24" style="left:59.5px;top:588.5px;"><path d="M18.500 2l3.500 3.500-16.500 16.500-3.500-3.500z" fill="#dcdcdc"/><path d="M5.500 2l5 5-3.500 3.500-5-5zM17 13.500l5 5-3.500 3.500-5-5z" fill="#dcdcdc"/></svg>
<svg width="22" height="22" viewBox="0 0 24 24" style="left:24px;top:624px;"><path d="M3 3.500l7-2.500 10 10-8 9.500-10.500-9z" fill="none" stroke="#f0f0f0" stroke-width="2"/><path d="M2.500 12.500l16-2.500-6.500 9z" fill="#f0f0f0"/><path d="M20 13.500c1.500 2.500 3 4.500 3 6a2.600 2.600 0 0 1-5.200 0c0-1.500 1-3.500 2.200-6z" fill="#f0f0f0"/><path d="M5 6l5-5" stroke="#f0f0f0" stroke-width="2"/></svg>
<svg width="22" height="22" viewBox="0 0 24 24" style="left:59.5px;top:624px;"><circle cx="12" cy="12" r="10.500" fill="none" stroke="#dcdcdc" stroke-width="2.200" stroke-dasharray="5 3"/><circle cx="12" cy="12" r="5.500" fill="none" stroke="#dcdcdc" stroke-width="1.800"/><path d="M6.500 12a5.500 5.500 0 0 0 11 0z" fill="#dcdcdc"/></svg>
<svg width="22" height="22" viewBox="0 0 24 24" style="left:24px;top:668.5px;"><rect x="3.500" y="3.500" width="17" height="17" fill="none" stroke="#dcdcdc" stroke-width="2"/><path d="M2 2l20 20M22 2l-20 20" fill="none" stroke="#dcdcdc" stroke-width="1.8"/><circle cx="2.500" cy="2.500" r="2" fill="#dcdcdc"/><circle cx="21.500" cy="2.500" r="2" fill="#dcdcdc"/><circle cx="2.500" cy="21.500" r="2" fill="#dcdcdc"/><circle cx="21.500" cy="21.500" r="2" fill="#dcdcdc"/></svg>
<svg width="22" height="22" viewBox="0 0 24 24" style="left:59.5px;top:668.5px;"><path d="M2 21.500h19.500l-3.500-19.500z" fill="none" stroke="#dcdcdc" stroke-width="2.4" stroke-linejoin="round"/><path d="M10.500 21c0-3 1.500-5.500 4-7" fill="none" stroke="#dcdcdc" stroke-width="1.6"/></svg>
<svg width="22" height="22" viewBox="0 0 24 24" style="left:24px;top:703.5px;"><path d="M13.500 1.500l9 9-3 1-4 4 .5 5-3.500 1-4-4.500-7 7-1-1 7-7-4.500-4 1-3.500 5 .5 4-4z" fill="#dcdcdc"/></svg>
<svg width="22" height="22" viewBox="0 0 24 24" style="left:24px;top:747px;"><rect x="2" y="2.500" width="20" height="19.500" fill="none" stroke="#dcdcdc" stroke-width="2.400" stroke-dasharray="6 3.500"/></svg>
<svg width="22" height="22" viewBox="0 0 24 24" style="left:59.5px;top:747px;"><circle cx="12" cy="12" r="10" fill="none" stroke="#dcdcdc" stroke-width="2.400" stroke-dasharray="5.500 3.500"/></svg>
<svg width="22" height="22" viewBox="0 0 24 24" style="left:24px;top:782px;"><path d="M8 3h14v10l-6 9h-14v-13z" fill="none" stroke="#dcdcdc" stroke-width="2.400" stroke-dasharray="6 3.500"/></svg>
<svg width="22" height="22" viewBox="0 0 24 24" style="left:59.5px;top:782px;"><path d="M3 8c3-5 9-6 13-4s7 7 5 12-7 5-7 2 2-5-2-7-6 0-9-3z" fill="none" stroke="#dcdcdc" stroke-width="2.400" stroke-dasharray="5 3.500"/></svg>
<svg width="22" height="22" viewBox="0 0 24 24" style="left:24px;top:817.5px;"><path d="M9 8l13 13" stroke="#dcdcdc" stroke-width="3"/><path d="M9 0v6M9 10.500v6M0.500 8h6M11.500 8h6M3 2l4 4M15 2l-4 4M3 14l4-4" stroke="#dcdcdc" stroke-width="2.200"/></svg>
<svg width="22" height="22" viewBox="0 0 24 24" style="left:59.5px;top:817.5px;"><rect x="2" y="3" width="19" height="19" fill="none" stroke="#dcdcdc" stroke-width="2.400" stroke-dasharray="5.500 4"/><path d="M17.500 1c1.500-1 3.500-.5 4.500 1s.5 3-1 4l-2 1.500 1 1.500-1.500 1.500-6.500-6.500 1.500-1.500 1.500 1z" fill="#dcdcdc"/><path d="M13.500 7l3 3-7.500 7.500-3 1 1-3z" fill="#484848" stroke="#dcdcdc" stroke-width="1.500"/></svg>
<svg width="22" height="22" viewBox="0 0 24 24" style="left:24px;top:852.5px;"><path d="M3 8v6c0 5 4 8 9 8s9-3 9-8v-6" fill="none" stroke="#dcdcdc" stroke-width="2.400" stroke-dasharray="5.500 3.500"/><path d="M4 4.500h16" fill="none" stroke="#dcdcdc" stroke-width="1.8"/><circle cx="3.500" cy="4.500" r="2.500" fill="#484848" stroke="#dcdcdc" stroke-width="1.600"/><circle cx="20.500" cy="4.500" r="2.500" fill="#484848" stroke="#dcdcdc" stroke-width="1.600"/></svg>
<svg width="22" height="22" viewBox="0 0 24 24" style="left:59.5px;top:852.5px;"><rect x="2" y="3" width="19" height="19" fill="none" stroke="#dcdcdc" stroke-width="2.400" stroke-dasharray="5.500 4"/><path d="M7 20c0-9 3-15 8-15s6 4 4 8" fill="none" stroke="#dcdcdc" stroke-width="2.600"/><path d="M2 2h9v3h-9z" fill="#484848"/></svg>
<svg width="22" height="22" viewBox="0 0 24 24" style="left:24px;top:897.5px;"><circle cx="9" cy="9" r="6.800" fill="none" stroke="#dcdcdc" stroke-width="2.6"/><path d="M14 14l8.500 8.500" stroke="#dcdcdc" stroke-width="3.400"/></svg>
<svg width="22" height="22" viewBox="0 0 24 24" style="left:59.5px;top:897.5px;"><path d="M5.500 11v-6.500a1.600 1.600 0 0 1 3.200 0v-2a1.600 1.600 0 0 1 3.200 0v-.5a1.600 1.600 0 0 1 3.200 0v1.500a1.600 1.600 0 0 1 3.200 0v9c0 1 .5 1 1-.2l1.200-2.500c.8-1.500 3-.8 2.300 1l-3.300 9.500c-.5 1.200-1.500 2.200-3 2.200h-8c-1.500 0-3-1.500-3-3z" fill="#dcdcdc"/><path d="M8.700 4v7M11.900 3v8M15.100 4v7" stroke="#484848" stroke-width="1"/></svg>
<div class="abs" style="left:27px;top:281.5px;width:53px;height:1px;background:#525252;"></div>
<div class="abs" style="left:27px;top:465px;width:53px;height:1px;background:#525252;"></div>
<div class="abs" style="left:27px;top:541.5px;width:53px;height:1px;background:#525252;"></div>
<div class="abs" style="left:27px;top:659px;width:53px;height:1px;background:#525252;"></div>
<div class="abs" style="left:27px;top:735.5px;width:53px;height:1px;background:#525252;"></div>
<div class="abs" style="left:27px;top:885.5px;width:53px;height:1px;background:#525252;"></div>
<div class="abs" style="left:243.5px;top:186.5px;width:90px;height:30.5px;background:#434343;border:1px solid #383838;border-bottom:none;border-radius:4px 4px 0 0"></div>
<div class="abs" style="left:115.5px;top:216.5px;width:401.5px;height:1px;background:#3a3a3a;"></div>
<div class="abs" style="left:115.5px;top:183px;width:125.5px;height:35px;background:#4a4a4a;border:1px solid #3a3a3a;border-bottom:none;border-radius:4px 4px 0 0"></div>
<div class="t" style="left:131.5px;top:191.3px;font-size:16px;letter-spacing:0.32px;line-height:20px;color:#dedede;">Tool Options</div>
<div class="t" style="left:259px;top:192.8px;font-size:16px;letter-spacing:0.18px;line-height:20px;color:#dedede;">Arrange</div>
<svg width="24" height="24" viewBox="0 0 24 24" style="left:116.7px;top:219.5px;"><circle cx="12" cy="12" r="11.200" fill="none" stroke="#dcdcdc" stroke-width="1.700"/><rect x="6.500" y="11" width="11" height="5.200" fill="#dcdcdc"/><path d="M9.200 11.500v-1.500a2.800 2.800 0 0 1 5.600 0v1.500" fill="none" stroke="#dcdcdc" stroke-width="1.700"/></svg>
<div class="t" style="left:149.5px;top:222.3px;font-size:16px;letter-spacing:0.23px;line-height:20px;color:#dedede;">Tool Options</div>
<div class="abs" style="left:498px;top:243px;width:18px;height:343.5px;background:#3d3d3d;border-radius:2px"></div>
<div class="abs" style="left:498.5px;top:261.5px;width:17px;height:191.5px;background:#4b4b4b;border:1px solid #3a3a3a;border-radius:2px"></div>
<div class="abs" style="left:498.5px;top:243.5px;width:17px;height:17.5px;background:#4a4a4a;border:1px solid #3a3a3a;border-radius:2px"></div>
<div class="abs" style="left:498.5px;top:568.5px;width:17px;height:17.5px;background:#4a4a4a;border:1px solid #3a3a3a;border-radius:2px"></div>
<svg width="10" height="6" viewBox="0 0 10 6" style="left:502px;top:249px;"><path d="M0 6h10l-5-6z" fill="#a8a8a8"/></svg>
<svg width="10" height="6" viewBox="0 0 10 6" style="left:502px;top:573.5px;"><path d="M0 0h10l-5 6z" fill="#a8a8a8"/></svg>
<div class="t" style="left:135px;top:274.8px;font-size:16px;letter-spacing:0.07px;line-height:20px;color:#dedede;">Fill mode</div>
<div class="abs" style="left:218px;top:265px;width:121px;height:38.5px;background:#454545;border:1px solid #353535;border-radius:4px"></div>
<div class="abs" style="left:257.83px;top:266px;width:1px;height:36.5px;background:#383838;"></div>
<div class="abs" style="left:298.67px;top:266px;width:39.33px;height:36.5px;background:#556f89;border-radius:0 4px 4px 0"></div>
<div class="abs" style="left:298.17px;top:266px;width:1px;height:36.5px;background:#383838;"></div>
<svg width="24" height="24" viewBox="0 0 24 24" style="left:226px;top:273px;"><path d="M7 3.500c4-2.500 9-1.500 11 .5s3 6 1 10-6 5-6.500 2.500 1.500-4.500-1.500-6-5 0-7.500-2.500 1.500-3.500 3.500-4.500z" fill="none" stroke="#dcdcdc" stroke-width="2.400" stroke-dasharray="4.500 3"/></svg>
<svg width="24" height="26" viewBox="0 0 24 26" style="left:266.5px;top:272px;"><path d="M13 7l9 9" stroke="#dcdcdc" stroke-width="2.400"/><path d="M13 0v5M13 9.500v4M6.500 7h4.500M15 7h4.500M8.500 2.500l3 3M17.500 2.500l-3 3M8.500 11.500l3-3" stroke="#dcdcdc" stroke-width="1.800"/><path d="M1 15l8-3.500 8 3.500-8 3.500zM1 18.500l8 3.500 8-3.500M1 22l8 3.500 8-3.500" fill="none" stroke="#9a9a9a" stroke-width="1.200"/></svg>
<svg width="24" height="27" viewBox="0 0 24 27" style="left:307px;top:271px;"><path d="M16 1.500c1.500-1.500 4-1 5 .5s.5 3.500-1 5l-2 1.500 1 1.500-1.500 1.500-6.500-6.500 1.500-1.500 1.500 1z" fill="#dcdcdc"/><path d="M12.500 7l3 3-6 7-2.500.5.500-3z" fill="none" stroke="#dcdcdc" stroke-width="1.500"/><path d="M1 16l7-3 7 3-7 3zM1 19.500l7 3 7-3M1 22.500l7 3 7-3" fill="none" stroke="#b4bfca" stroke-width="1.200"/></svg>
<div class="abs" style="left:120px;top:310.2px;width:370px;height:1px;background:#383838;"></div>
<div class="t" style="left:135px;top:330.8px;font-size:16px;letter-spacing:-0.09px;line-height:20px;color:#dedede;">Fill source</div>
<div class="abs" style="left:223.5px;top:320px;width:121px;height:39px;background:#454545;border:1px solid #353535;border-radius:4px"></div>
<div class="abs" style="left:224.5px;top:321px;width:39.33px;height:37px;background:#556f89;border-radius:4px 0 0 4px"></div>
<div class="abs" style="left:263.33px;top:321px;width:1px;height:37px;background:#383838;"></div>
<div class="abs" style="left:303.67px;top:321px;width:1px;height:37px;background:#383838;"></div>
<svg width="24" height="24" viewBox="0 0 24 24" style="left:231.5px;top:328px;"><rect x="10" y="10" width="13" height="13" fill="#c8c8c8"/><rect x="1.500" y="1.500" width="13" height="13" fill="#556f89" stroke="#dcdcdc" stroke-width="1.800"/></svg>
<svg width="24" height="24" viewBox="0 0 24 24" style="left:272px;top:328px;"><rect x="1.500" y="1.500" width="13" height="13" fill="#454545" stroke="#dcdcdc" stroke-width="1.800"/><rect x="9.500" y="9.500" width="13.500" height="13.500" fill="#d8d8d8"/></svg>
<svg width="24" height="24" viewBox="0 0 24 24" style="left:312.5px;top:328px;"><defs><clipPath id="hc"><rect x="2.500" y="2.500" width="19" height="19"/></clipPath></defs><rect x="1.500" y="1.500" width="21" height="21" rx="1" fill="#454545" stroke="#dcdcdc" stroke-width="1.800"/><g clip-path="url(#hc)"><path d="M-12 22.500l21 -21" stroke="#dcdcdc" stroke-width="1.800"/><path d="M-7.5 22.500l21 -21" stroke="#dcdcdc" stroke-width="1.800"/><path d="M-3 22.500l21 -21" stroke="#dcdcdc" stroke-width="1.800"/><path d="M1.5 22.500l21 -21" stroke="#dcdcdc" stroke-width="1.800"/><path d="M6 22.500l21 -21" stroke="#dcdcdc" stroke-width="1.800"/><path d="M10.5 22.500l21 -21" stroke="#dcdcdc" stroke-width="1.800"/><path d="M15 22.500l21 -21" stroke="#dcdcdc" stroke-width="1.800"/><path d="M19.5 22.500l21 -21" stroke="#dcdcdc" stroke-width="1.800"/></g></svg>
<div class="abs" style="left:142px;top:372px;width:20px;height:20px;background:#383838;border-radius:2px"></div>
<div class="t" style="left:169.5px;top:373.3px;font-size:16px;letter-spacing:0.04px;line-height:20px;color:#dedede;">Use custom blending options</div>
<div class="abs" style="left:120px;top:402.2px;width:370px;height:1px;background:#383838;"></div>
<div class="t" style="left:135px;top:422.8px;font-size:16px;letter-spacing:-0.29px;line-height:20px;color:#dedede;">Reference</div>
<div class="abs" style="left:223.5px;top:412px;width:121px;height:39.5px;background:#454545;border:1px solid #353535;border-radius:4px"></div>
<div class="abs" style="left:224.5px;top:413px;width:39.33px;height:37.5px;background:#556f89;border-radius:4px 0 0 4px"></div>
<div class="abs" style="left:263.33px;top:413px;width:1px;height:37.5px;background:#383838;"></div>
<div class="abs" style="left:303.67px;top:413px;width:1px;height:37.5px;background:#383838;"></div>
<svg width="24" height="24" viewBox="0 0 24 24" style="left:231.5px;top:420px;"><path d="M2 9l10-5.500 10 5.500-10 5.500z" fill="none" stroke="#d8dde2" stroke-width="1.700"/><path d="M2 13.500l10 5.500 10-5.500M2 17.500l10 5.500 10-5.500" fill="none" stroke="#9fb0c0" stroke-width="1.300"/></svg>
<svg width="24" height="24" viewBox="0 0 24 24" style="left:272px;top:419.5px;"><path d="M2 7.500l10-5.500 10 5.500-10 5.500zM2 12.500l10 5.500 10-5.500M2 17.500l10 5.500 10-5.500" fill="none" stroke="#dcdcdc" stroke-width="1.800"/></svg>
<svg width="22" height="22" viewBox="0 0 22 22" style="left:314px;top:421px;"><path d="M1.500 1.500h8.500l10.500 10.500-8.500 8.500-10.500-10.500z" fill="#dcdcdc"/><circle cx="6" cy="6" r="2" fill="#454545"/></svg>
<div class="abs" style="left:120px;top:458.7px;width:370px;height:1px;background:#383838;"></div>
<div class="t" style="left:135px;top:468.3px;font-size:16px;letter-spacing:0.15px;line-height:20px;color:#dedede;">Fill extent</div>
<div class="abs" style="left:142.3px;top:497px;width:332px;height:29.5px;background:#3c3c3c;border-radius:3px;border:1px solid #343434"></div>
<div class="abs" style="left:143.3px;top:498px;width:311.5px;height:27.5px;background:#353535;border-radius:2px 0 0 2px"></div>
<div class="abs" style="left:143.3px;top:498px;width:22.43px;height:27.5px;background:#56799f;border-radius:2px 0 0 2px"></div>
<div class="t" style="left:254px;top:502.55px;font-size:16px;letter-spacing:0.01px;line-height:20px;color:#ececec;">Threshold: 8</div>
<svg width="10" height="17" viewBox="0 0 10 17" style="left:459.3px;top:503.25px;"><path d="M0 5.500l5-5.500 5 5.500zM0 11.500l5 5.500 5-5.500z" fill="#a0a0a0"/></svg>
<div class="abs" style="left:142.3px;top:538.5px;width:332px;height:28.5px;background:#3c3c3c;border-radius:3px;border:1px solid #343434"></div>
<div class="abs" style="left:143.3px;top:539.5px;width:311.5px;height:26.5px;background:#353535;border-radius:2px 0 0 2px"></div>
<div class="abs" style="left:143.3px;top:539.5px;width:311.5px;height:26.5px;background:#56799f;border-radius:2px 0 0 2px"></div>
<div class="t" style="left:248.5px;top:543.55px;font-size:16px;letter-spacing:-0.22px;line-height:20px;color:#ececec;">Spread: 100%</div>
<svg width="10" height="17" viewBox="0 0 10 17" style="left:459.3px;top:544.25px;"><path d="M0 5.500l5-5.500 5 5.500zM0 11.500l5 5.500 5-5.500z" fill="#a0a0a0"/></svg>
<div class="abs" style="left:120px;top:576.5px;width:370px;height:1px;background:#383838;"></div>
<svg width="26" height="2" viewBox="0 0 26 2" style="left:306px;top:590px;"><rect x="0" y="0" width="2" height="2" fill="#8a8a8a"/><rect x="4.6" y="0" width="2" height="2" fill="#8a8a8a"/><rect x="9.2" y="0" width="2" height="2" fill="#8a8a8a"/><rect x="13.8" y="0" width="2" height="2" fill="#8a8a8a"/><rect x="18.4" y="0" width="2" height="2" fill="#8a8a8a"/><rect x="23" y="0" width="2" height="2" fill="#8a8a8a"/></svg>
<svg width="2" height="26" viewBox="0 0 2 26" style="left:521.5px;top:612px;"><rect x="0" y="0" width="2" height="2" fill="#8a8a8a"/><rect x="0" y="4.6" width="2" height="2" fill="#8a8a8a"/><rect x="0" y="9.2" width="2" height="2" fill="#8a8a8a"/><rect x="0" y="13.8" width="2" height="2" fill="#8a8a8a"/><rect x="0" y="18.4" width="2" height="2" fill="#8a8a8a"/><rect x="0" y="23" width="2" height="2" fill="#8a8a8a"/></svg>
<svg width="2" height="26" viewBox="0 0 2 26" style="left:110.5px;top:612px;"><rect x="0" y="0" width="2" height="2" fill="#8a8a8a"/><rect x="0" y="4.6" width="2" height="2" fill="#8a8a8a"/><rect x="0" y="9.2" width="2" height="2" fill="#8a8a8a"/><rect x="0" y="13.8" width="2" height="2" fill="#8a8a8a"/><rect x="0" y="18.4" width="2" height="2" fill="#8a8a8a"/><rect x="0" y="23" width="2" height="2" fill="#8a8a8a"/></svg>
<svg width="24" height="24" viewBox="0 0 24 24" style="left:116.7px;top:595.5px;"><circle cx="12" cy="12" r="11.200" fill="none" stroke="#dcdcdc" stroke-width="1.700"/><rect x="6.500" y="11" width="11" height="5.200" fill="#dcdcdc"/><path d="M9.200 11.500v-1.500a2.800 2.800 0 0 1 5.600 0v1.500" fill="none" stroke="#dcdcdc" stroke-width="1.700"/></svg>
<div class="t" style="left:149.5px;top:598.8px;font-size:16px;letter-spacing:-0.5px;line-height:20px;color:#dedede;">Layers</div>
<div class="abs" style="left:117.5px;top:621.5px;width:348.5px;height:44px;background:#434343;border-radius:5px;border:1.500px solid #333"></div>
<div class="t" style="left:123.5px;top:634.8px;font-size:16px;letter-spacing:0.39px;line-height:20px;color:#e2e2e2;">Normal</div>
<svg width="12" height="6.5" viewBox="0 0 12 6.5" style="left:444.5px;top:641px;"><path d="M0 0h12l-6 6.500z" fill="#a8a8a8"/></svg>
<svg width="23" height="26" viewBox="0 0 23 26" style="left:481px;top:631px;"><path d="M1.500 1.500h20l-7.500 10.500v12l-5-3v-9z" fill="none" stroke="#dcdcdc" stroke-width="2" stroke-linejoin="round"/></svg>
<svg width="7" height="4.5" viewBox="0 0 7 4.5" style="left:504.5px;top:658px;"><path d="M0 0h7l-3.500 4.500z" fill="#9a9a9a"/></svg>
<div class="abs" style="left:116.5px;top:671px;width:350.5px;height:42px;background:#3c3c3c;border-radius:4px;border:1px solid #343434"></div>
<div class="abs" style="left:117.5px;top:672px;width:328px;height:40px;background:#56799f;border-radius:3px 0 0 3px"></div>
<div class="t" style="left:227px;top:683.3px;font-size:16px;letter-spacing:-0.12px;line-height:20px;color:#f0f0f0;white-space:pre;">Opacity:  100%</div>
<svg width="11" height="24" viewBox="0 0 11 24" style="left:450.5px;top:680px;"><path d="M0 6l5.500-6 5.500 6z" fill="#7a7a7a"/><path d="M0 18l5.500 6 5.500-6z" fill="#a8a8a8"/></svg>
<svg width="19" height="16.5" viewBox="0 0 19 16.5" style="left:482.5px;top:684px;"><path d="M0 1.500h19M0 8.200h19M0 15h19" stroke="#dcdcdc" stroke-width="2.400"/></svg>
<svg width="7" height="4.5" viewBox="0 0 7 4.5" style="left:504.5px;top:706.5px;"><path d="M0 0h7l-3.500 4.500z" fill="#9a9a9a"/></svg>
<div class="abs" style="left:115.5px;top:717px;width:399.5px;height:299px;background:#3a3a3a;"></div>
<div class="abs" style="left:182px;top:835.5px;width:332.5px;height:57px;background:#56799f;"></div>
<svg width="22" height="22" viewBox="0 0 22 22" style="left:122.5px;top:736px;"><path d="M1 9.500c3-5 7-7 10-7s7 2 10 7c-3 5-7 7-10 7s-7-2-10-7z" fill="none" stroke="#e0e0e0" stroke-width="1.600"/><circle cx="11" cy="8.500" r="4.600" fill="#e0e0e0"/><path d="M2 14.500c3 4 6 5.500 9 5.500s6-1.500 9-5.500" fill="none" stroke="#e0e0e0" stroke-width="1.600"/></svg>
<div class="abs" style="left:155px;top:738px;width:21px;height:20px;background:#353535;border-radius:2px"></div>
<svg width="19" height="20" viewBox="0 0 19 20" style="left:434.5px;top:736px;"><rect x="0.500" y="9" width="18" height="11" fill="#7c7c7c"/><path d="M9 9v-3a4 4 0 0 1 8 0v1.500" fill="none" stroke="#7c7c7c" stroke-width="2"/></svg>
<div class="t" style="left:459.500px;top:732.5px;font-size:26px;line-height:26px;font-style:italic;color:#7c7c7c;font-family:'DejaVu Sans',sans-serif;transform:scaleX(1.05);transform-origin:0 50%">α</div>
<svg width="23" height="16" viewBox="0 0 23 16" style="left:487px;top:739px;"><path d="M0 0h10.500v4h-10.500zM12.500 0h10.500v4h-10.500zM0 6h5v4h-5zM7 6h9v4h-9zM18 6h5v4h-5zM0 12h10.500v4h-10.500zM12.500 12h10.500v4h-10.500z" fill="#7c7c7c"/></svg>
<svg width="22" height="22" viewBox="0 0 22 22" style="left:122.5px;top:795px;"><path d="M1 9.500c3-5 7-7 10-7s7 2 10 7c-3 5-7 7-10 7s-7-2-10-7z" fill="none" stroke="#e0e0e0" stroke-width="1.600"/><circle cx="11" cy="8.500" r="4.600" fill="#e0e0e0"/><path d="M2 14.500c3 4 6 5.500 9 5.500s6-1.500 9-5.500" fill="none" stroke="#e0e0e0" stroke-width="1.600"/></svg>
<div class="abs" style="left:155px;top:797px;width:21px;height:20px;background:#353535;border-radius:2px"></div>
<svg width="19" height="20" viewBox="0 0 19 20" style="left:434.5px;top:795px;"><rect x="0.500" y="9" width="18" height="11" fill="#7c7c7c"/><path d="M9 9v-3a4 4 0 0 1 8 0v1.500" fill="none" stroke="#7c7c7c" stroke-width="2"/></svg>
<div class="t" style="left:459.500px;top:791.5px;font-size:26px;line-height:26px;font-style:italic;color:#7c7c7c;font-family:'DejaVu Sans',sans-serif;transform:scaleX(1.05);transform-origin:0 50%">α</div>
<svg width="22.2" height="22.2" viewBox="0 0 22.2 22.2" style="left:487.5px;top:795px;"><rect x="0" y="0" width="7.400" height="7.400" fill="#525252"/><rect x="7.4" y="0" width="7.400" height="7.400" fill="#707070"/><rect x="14.8" y="0" width="7.400" height="7.400" fill="#525252"/><rect x="0" y="7.4" width="7.400" height="7.400" fill="#707070"/><rect x="7.4" y="7.4" width="7.400" height="7.400" fill="#525252"/><rect x="14.8" y="7.4" width="7.400" height="7.400" fill="#707070"/><rect x="0" y="14.8" width="7.400" height="7.400" fill="#525252"/><rect x="7.4" y="14.8" width="7.400" height="7.400" fill="#707070"/><rect x="14.8" y="14.8" width="7.400" height="7.400" fill="#525252"/></svg>
<svg width="22" height="22" viewBox="0 0 22 22" style="left:122.5px;top:852.5px;"><path d="M1 9.500c3-5 7-7 10-7s7 2 10 7c-3 5-7 7-10 7s-7-2-10-7z" fill="none" stroke="#e0e0e0" stroke-width="1.600"/><circle cx="11" cy="8.500" r="4.600" fill="#e0e0e0"/><path d="M2 14.500c3 4 6 5.500 9 5.500s6-1.500 9-5.500" fill="none" stroke="#e0e0e0" stroke-width="1.600"/></svg>
<div class="abs" style="left:155px;top:855px;width:21px;height:20px;background:#353535;border-radius:2px"></div>
<svg width="14" height="14" viewBox="0 0 14 14" style="left:159px;top:858px;"><path d="M1.500 7l4 5 7-11" fill="none" stroke="#e6e6e6" stroke-width="1.800"/></svg>
<svg width="19" height="20" viewBox="0 0 19 20" style="left:434.5px;top:852.5px;"><rect x="0.500" y="9" width="18" height="11" fill="#8fa3b8"/><path d="M9 9v-3a4 4 0 0 1 8 0v1.500" fill="none" stroke="#8fa3b8" stroke-width="2"/></svg>
<div class="t" style="left:459.500px;top:849px;font-size:26px;line-height:26px;font-style:italic;color:#8fa3b8;font-family:'DejaVu Sans',sans-serif;transform:scaleX(1.05);transform-origin:0 50%">α</div>
<svg width="22.2" height="22.2" viewBox="0 0 22.2 22.2" style="left:487.5px;top:852.5px;"><rect x="0" y="0" width="7.400" height="7.400" fill="#6b8aaa"/><rect x="7.4" y="0" width="7.400" height="7.400" fill="#8fa3b8"/><rect x="14.8" y="0" width="7.400" height="7.400" fill="#6b8aaa"/><rect x="0" y="7.4" width="7.400" height="7.400" fill="#8fa3b8"/><rect x="7.4" y="7.4" width="7.400" height="7.400" fill="#6b8aaa"/><rect x="14.8" y="7.4" width="7.400" height="7.400" fill="#8fa3b8"/><rect x="0" y="14.8" width="7.400" height="7.400" fill="#6b8aaa"/><rect x="7.4" y="14.8" width="7.400" height="7.400" fill="#8fa3b8"/><rect x="14.8" y="14.8" width="7.400" height="7.400" fill="#6b8aaa"/></svg>
<svg width="22" height="22" viewBox="0 0 22 22" style="left:122.5px;top:911.5px;"><path d="M1 9.500c3-5 7-7 10-7s7 2 10 7c-3 5-7 7-10 7s-7-2-10-7z" fill="none" stroke="#e0e0e0" stroke-width="1.600"/><circle cx="11" cy="8.500" r="4.600" fill="#e0e0e0"/><path d="M2 14.500c3 4 6 5.500 9 5.500s6-1.500 9-5.500" fill="none" stroke="#e0e0e0" stroke-width="1.600"/></svg>
<div class="abs" style="left:155px;top:913.5px;width:21px;height:20px;background:#353535;border-radius:2px"></div>
<svg width="19" height="20" viewBox="0 0 19 20" style="left:434.5px;top:911.5px;"><rect x="0.500" y="9" width="18" height="11" fill="#7c7c7c"/><path d="M9 9v-3a4 4 0 0 1 8 0v1.500" fill="none" stroke="#7c7c7c" stroke-width="2"/></svg>
<div class="t" style="left:459.500px;top:908px;font-size:26px;line-height:26px;font-style:italic;color:#7c7c7c;font-family:'DejaVu Sans',sans-serif;transform:scaleX(1.05);transform-origin:0 50%">α</div>
<svg width="23" height="16" viewBox="0 0 23 16" style="left:487px;top:914.5px;"><path d="M0 0h10.500v4h-10.500zM12.500 0h10.500v4h-10.500zM0 6h5v4h-5zM7 6h9v4h-9zM18 6h5v4h-5zM0 12h10.500v4h-10.500zM12.500 12h10.500v4h-10.500z" fill="#7c7c7c"/></svg>
<svg width="22" height="22" viewBox="0 0 22 22" style="left:122.5px;top:970.5px;"><path d="M1 9.500c3-5 7-7 10-7s7 2 10 7c-3 5-7 7-10 7s-7-2-10-7z" fill="none" stroke="#e0e0e0" stroke-width="1.600"/><circle cx="11" cy="8.500" r="4.600" fill="#e0e0e0"/><path d="M2 14.500c3 4 6 5.500 9 5.500s6-1.500 9-5.500" fill="none" stroke="#e0e0e0" stroke-width="1.600"/></svg>
<div class="abs" style="left:155px;top:972.5px;width:21px;height:20px;background:#353535;border-radius:2px"></div>
<svg width="19" height="20" viewBox="0 0 19 20" style="left:434.5px;top:970.5px;"><rect x="0.500" y="9" width="18" height="11" fill="#7c7c7c"/><path d="M9 9v-3a4 4 0 0 1 8 0v1.500" fill="none" stroke="#7c7c7c" stroke-width="2"/></svg>
<div class="t" style="left:459.500px;top:967px;font-size:26px;line-height:26px;font-style:italic;color:#7c7c7c;font-family:'DejaVu Sans',sans-serif;transform:scaleX(1.05);transform-origin:0 50%">α</div>
<svg width="22.2" height="22.2" viewBox="0 0 22.2 22.2" style="left:487.5px;top:970.5px;"><rect x="0" y="0" width="7.400" height="7.400" fill="#525252"/><rect x="7.4" y="0" width="7.400" height="7.400" fill="#707070"/><rect x="14.8" y="0" width="7.400" height="7.400" fill="#525252"/><rect x="0" y="7.4" width="7.400" height="7.400" fill="#707070"/><rect x="7.4" y="7.4" width="7.400" height="7.400" fill="#525252"/><rect x="14.8" y="7.4" width="7.400" height="7.400" fill="#707070"/><rect x="0" y="14.8" width="7.400" height="7.400" fill="#525252"/><rect x="7.4" y="14.8" width="7.400" height="7.400" fill="#707070"/><rect x="14.8" y="14.8" width="7.400" height="7.400" fill="#525252"/></svg>
<div class="abs" style="left:196px;top:724.5px;width:29.5px;height:48.5px;background:#fff;background-image:repeating-conic-gradient(#d9d9d9 0 25%,#fff 0 50%);background-size:11px 11px;"></div>
<svg width="29.5" height="48.5" viewBox="0 0 29.5 48.5" style="left:196px;top:724.5px;"><g fill="#222"><rect x="6" y="9" width="2" height="2"/><rect x="11" y="5" width="2" height="2"/><rect x="9" y="13" width="3" height="2"/><rect x="15" y="11" width="2" height="2"/><rect x="5" y="17" width="2" height="2"/><rect x="13" y="18" width="2" height="2"/><rect x="8" y="23" width="2" height="2"/><rect x="17" y="26" width="2" height="2"/><rect x="24" y="27" width="2" height="2"/><rect x="10" y="37" width="3" height="2"/><rect x="14" y="40" width="3" height="2"/><rect x="22" y="38" width="3" height="2"/><rect x="25" y="35" width="2" height="2"/></g></svg>
<div class="abs" style="left:196px;top:783px;width:29.5px;height:48.5px;background:#fff;background-image:repeating-conic-gradient(#d9d9d9 0 25%,#fff 0 50%);background-size:11px 11px;"></div>
<svg width="29.5" height="48.5" viewBox="0 0 29.5 48.5" style="left:196px;top:783px;"><path d="M3 3l3 3 3-3.500 3 3 3.500-1 1.500 6c1.500 3 .5 7-2 9h-9c-3-1-4.500-5-4-9z" fill="#fdae1c"/><path d="M6 21c4-1.500 9-1 12 1l4.500 9-1.500 9c-5 2-11 2-14.500 0-2-5-3-13-.5-19z" fill="#c50d1a"/><path d="M8 39c4 2 9 2 13 0l3-5 .5-6 2.500-1.500 2.500 5v17h-21.500z" fill="#fdae1c"/><rect x="8.500" y="9.500" width="2" height="2.500" fill="#222"/><rect x="12.500" y="10" width="2" height="2" fill="#222"/></svg>
<div class="abs" style="left:188px;top:840px;width:47.5px;height:50px;background:#fff3d7;border:1.500px solid #353535"></div>
<div class="abs" style="left:193px;top:900px;width:37px;height:48.5px;background:#fff;"></div>
<div class="abs" style="left:222px;top:958.5px;width:37.5px;height:48.5px;background:#fff;"></div>
<svg width="37" height="48.5" viewBox="0 0 37 48.5" style="left:193px;top:900px;"><g fill="#333"><rect x="10" y="5" width="2" height="1.500"/><rect x="13" y="9" width="3" height="2"/><rect x="9" y="13" width="2" height="2"/><rect x="18" y="8" width="2" height="2"/><rect x="22" y="12" width="3" height="2"/><rect x="20" y="17" width="2" height="2"/><rect x="12" y="20" width="2" height="2"/><rect x="26" y="22" width="2" height="2"/><rect x="15" y="27" width="2" height="2"/><rect x="28" y="30" width="2" height="2"/><rect x="17" y="34" width="2" height="2"/><rect x="24" y="37" width="2" height="2"/><rect x="14" y="40" width="2" height="2"/><rect x="30" y="41" width="2" height="2"/><rect x="19" y="44" width="2" height="1.500"/></g><g fill="#6d8fa3"><rect x="16" y="14" width="2" height="2"/><rect x="23" y="25" width="2" height="2"/><rect x="13" y="32" width="2" height="2"/><rect x="21" y="42" width="2" height="2"/></g><path d="M12 8l3 4 4-3 4 4M11 16c2 4 6 5 10 2M14 24c3 3 3 8 1 12M25 28c2 3 2 8 0 12" fill="none" stroke="#444" stroke-width=".7" stroke-dasharray="2 2"/></svg>
<svg width="37" height="48.5" viewBox="0 0 37 48.5" style="left:222px;top:958.5px;"><g fill="#333"><rect x="10" y="5" width="2" height="1.500"/><rect x="13" y="9" width="3" height="2"/><rect x="9" y="13" width="2" height="2"/><rect x="18" y="8" width="2" height="2"/><rect x="22" y="12" width="3" height="2"/><rect x="20" y="17" width="2" height="2"/><rect x="12" y="20" width="2" height="2"/><rect x="26" y="22" width="2" height="2"/><rect x="15" y="27" width="2" height="2"/><rect x="28" y="30" width="2" height="2"/><rect x="17" y="34" width="2" height="2"/><rect x="24" y="37" width="2" height="2"/><rect x="14" y="40" width="2" height="2"/><rect x="30" y="41" width="2" height="2"/><rect x="19" y="44" width="2" height="1.500"/></g><g fill="#6d8fa3"><rect x="16" y="14" width="2" height="2"/><rect x="23" y="25" width="2" height="2"/><rect x="13" y="32" width="2" height="2"/><rect x="21" y="42" width="2" height="2"/></g><path d="M12 8l3 4 4-3 4 4M11 16c2 4 6 5 10 2M14 24c3 3 3 8 1 12M25 28c2 3 2 8 0 12" fill="none" stroke="#444" stroke-width=".7" stroke-dasharray="2 2"/></svg>
<svg width="16" height="15" viewBox="0 0 16 15" style="left:245.5px;top:721.5px;"><path d="M1 3.500v-2.500h6l1.500 2.500" fill="none" stroke="#dcdcdc" stroke-width="1.500"/><rect x="1" y="3.500" width="14" height="10.500" fill="none" stroke="#dcdcdc" stroke-width="1.600"/><path d="M1 7h14" stroke="#dcdcdc" stroke-width="1.400"/></svg>
<svg width="10" height="15.5" viewBox="0 0 10 15.5" style="left:248.5px;top:758px;"><path d="M1 1l7.500 6.800-7.500 6.800" fill="none" stroke="#dcdcdc" stroke-width="1.800"/></svg>
<svg width="15" height="15" viewBox="0 0 15 15" style="left:246px;top:780px;"><path d="M3.500 1h10.500v9.500l-3.500 3.500h-6" fill="none" stroke="#dcdcdc" stroke-width="1.500"/><path d="M1 1.500l8.500 8.500M9.500 5v5h-5" fill="none" stroke="#dcdcdc" stroke-width="1.600"/></svg>
<svg width="15" height="15" viewBox="0 0 15 15" style="left:246px;top:839px;"><path d="M3.500 1h10.500v9.500l-3.500 3.500h-6" fill="none" stroke="#dcdcdc" stroke-width="1.500"/><path d="M1 1.500l8.500 8.500M9.500 5v5h-5" fill="none" stroke="#dcdcdc" stroke-width="1.600"/></svg>
<svg width="16" height="15" viewBox="0 0 16 15" style="left:245.5px;top:897.5px;"><path d="M1 3.500v-2.500h6l1.500 2.500" fill="none" stroke="#dcdcdc" stroke-width="1.500"/><rect x="1" y="3.500" width="14" height="10.500" fill="none" stroke="#dcdcdc" stroke-width="1.600"/><path d="M1 7h14" stroke="#dcdcdc" stroke-width="1.400"/></svg>
<svg width="17" height="11" viewBox="0 0 17 11" style="left:244.5px;top:935.5px;"><path d="M1 1l7.500 8 7.500-8" fill="none" stroke="#dcdcdc" stroke-width="1.800"/></svg>
<svg width="15" height="15" viewBox="0 0 15 15" style="left:275.5px;top:956px;"><path d="M3.500 1h10.500v9.500l-3.500 3.500h-6" fill="none" stroke="#dcdcdc" stroke-width="1.500"/><path d="M1 1.500l8.500 8.500M9.500 5v5h-5" fill="none" stroke="#dcdcdc" stroke-width="1.600"/></svg>
<svg width="12" height="12" viewBox="0 0 12 12" style="left:195px;top:975px;"><path d="M.5 0v11.500h11.500" fill="none" stroke="#4a4a4a" stroke-width="1"/></svg>
<div class="t" style="left:275.5px;top:738.8px;font-size:16px;letter-spacing:0.14px;line-height:20px;color:#dedede;">Linework</div>
<div class="t" style="left:275.5px;top:797.8px;font-size:16px;letter-spacing:-0.57px;line-height:20px;color:#dedede;">Paint Layer 1</div>
<div class="t" style="left:275.5px;top:855.3px;font-size:16px;letter-spacing:-0.76px;line-height:20px;color:#e8e8e8;font-weight:700;">Paint Layer 3</div>
<div class="t" style="left:275.5px;top:914.3px;font-size:16px;letter-spacing:-0.99px;line-height:20px;color:#dedede;">Base</div>
<div class="t" style="left:305px;top:973.3px;font-size:16px;letter-spacing:-0.15px;line-height:20px;color:#dedede;">Background</div>
<svg width="27" height="27" viewBox="0 0 27 27" style="left:124px;top:1025.5px;"><path d="M13.500 0v27M0 13.500h27" stroke="#dcdcdc" stroke-width="2.400"/></svg>
<svg width="10.5" height="6" viewBox="0 0 10.5 6" style="left:163px;top:1036.5px;"><path d="M0 0h10.500l-5.250 6z" fill="#8c8c8c"/></svg>
<svg width="30" height="29" viewBox="0 0 30 29" style="left:187px;top:1024.5px;"><rect x="7.500" y="1.200" width="21" height="21" fill="none" stroke="#dcdcdc" stroke-width="2.200"/><path d="M1.200 7.500v20.300h20.300" fill="none" stroke="#dcdcdc" stroke-width="2.200"/></svg>
<svg width="30" height="16" viewBox="0 0 30 16" style="left:234px;top:1031px;"><path d="M1 1l14 13.500 14-13.500" fill="none" stroke="#dcdcdc" stroke-width="2.400"/></svg>
<svg width="30" height="16" viewBox="0 0 30 16" style="left:281px;top:1031px;"><path d="M1 15l14-13.500 14 13.500" fill="none" stroke="#dcdcdc" stroke-width="2.400"/></svg>
<svg width="30" height="22" viewBox="0 0 30 22" style="left:327.5px;top:1028px;"><path d="M0 3h30M0 11h30M0 19h30" stroke="#dcdcdc" stroke-width="2.400"/><rect x="19" y="0" width="3.500" height="6" fill="#dcdcdc"/><rect x="6.500" y="8" width="3.500" height="6" fill="#dcdcdc"/><rect x="14" y="16" width="3.500" height="6" fill="#dcdcdc"/></svg>
<svg width="10.5" height="6" viewBox="0 0 10.5 6" style="left:368px;top:1036.5px;"><path d="M0 0h10.500l-5.250 6z" fill="#8c8c8c"/></svg>
<svg width="27" height="29" viewBox="0 0 27 29" style="left:480.5px;top:1024.5px;"><path d="M8.500 3.500v-2.500h10v2.500" fill="none" stroke="#dcdcdc" stroke-width="2"/><rect x="0.500" y="3.500" width="26" height="4.500" rx="1" fill="#dcdcdc"/><path d="M3 10h21v16a3 3 0 0 1-3 3h-15a3 3 0 0 1-3-3z" fill="#dcdcdc"/></svg>
<div class="abs" style="left:526.5px;top:182.5px;width:1067px;height:46.5px;background:#484848;border:1.500px solid #393939;border-bottom:none;border-radius:5px 5px 0 0"></div>
<svg width="19.5" height="19.5" viewBox="0 0 22 22" style="left:545px;top:193.5px;"><circle cx="11.500" cy="11.500" r="9.300" fill="url(#kg2)"/><circle cx="14.500" cy="14.500" r="2.800" fill="#1c1c24"/><path d="M1 2.500l3-1.500 11 12-2.500 2z" fill="#221c2c"/></svg>
<svg width="0" height="0" style="left:0;top:0"><defs><linearGradient id="kg2" x1="0.200" y1="0" x2="0.700" y2="1"><stop offset="0" stop-color="#ff2ad4"/><stop offset=".45" stop-color="#e060f0"/><stop offset=".6" stop-color="#30d0ff"/><stop offset=".8" stop-color="#30e8d0"/><stop offset="1" stop-color="#f4e020"/></linearGradient></defs></svg>
<div class="t" style="left:919px;top:196.1px;font-size:17.5px;letter-spacing:-0.16px;line-height:20px;color:#d8d8d8;">20260327 - Scratch.kra (257.8 MiB)</div>
<svg width="17" height="17" viewBox="0 0 17 17" style="left:1553px;top:198.5px;"><path d="M1 1l15 15M16 1l-15 15" stroke="#e4e4e4" stroke-width="2.200"/></svg>
<div class="abs" style="left:526px;top:228px;width:1048px;height:814px;background:#818181;"></div>
<div class="abs" style="left:1575.5px;top:229px;width:18.5px;height:813px;background:#3d3d3d;"></div>
<div class="abs" style="left:1576px;top:229.5px;width:18px;height:17.5px;background:#494949;border:1px solid #3a3a3a;border-radius:2px"></div>
<div class="abs" style="left:1576px;top:1023px;width:18px;height:18.5px;background:#494949;border:1px solid #3a3a3a;border-radius:2px"></div>
<div class="abs" style="left:1576px;top:494px;width:18px;height:291px;background:#4b4b4b;border:1px solid #3a3a3a;border-radius:2px"></div>
<svg width="10" height="6" viewBox="0 0 10 6" style="left:1580px;top:235.5px;"><path d="M0 6h10l-5-6z" fill="#a8a8a8"/></svg>
<svg width="10" height="6" viewBox="0 0 10 6" style="left:1580px;top:1029.5px;"><path d="M0 0h10l-5 6z" fill="#a8a8a8"/></svg>
<div class="abs" style="left:526px;top:1043.5px;width:1048px;height:18.5px;background:#3d3d3d;"></div>
<div class="abs" style="left:526px;top:1044px;width:18px;height:18px;background:#494949;border:1px solid #3a3a3a;border-radius:2px"></div>
<div class="abs" style="left:1555px;top:1044px;width:18.5px;height:18px;background:#494949;border:1px solid #3a3a3a;border-radius:2px"></div>
<div class="abs" style="left:850px;top:1044px;width:398.5px;height:18px;background:#4b4b4b;border:1px solid #3a3a3a;border-radius:2px"></div>
<svg width="6" height="10" viewBox="0 0 6 10" style="left:532px;top:1048px;"><path d="M6 0v10l-6-5z" fill="#a8a8a8"/></svg>
<svg width="6" height="10" viewBox="0 0 6 10" style="left:1561.5px;top:1048px;"><path d="M0 0v10l6-5z" fill="#a8a8a8"/></svg>
<svg width="2" height="26" viewBox="0 0 2 26" style="left:1598px;top:612px;"><rect x="0" y="0" width="2" height="2" fill="#8a8a8a"/><rect x="0" y="4.6" width="2" height="2" fill="#8a8a8a"/><rect x="0" y="9.2" width="2" height="2" fill="#8a8a8a"/><rect x="0" y="13.8" width="2" height="2" fill="#8a8a8a"/><rect x="0" y="18.4" width="2" height="2" fill="#8a8a8a"/><rect x="0" y="23" width="2" height="2" fill="#8a8a8a"/></svg>
<svg width="2000" height="1124" viewBox="0 0 2000 1124" style="left:0;top:0"><defs><clipPath id="ccv"><rect x="777" y="281" width="652.500" height="688"/></clipPath></defs><rect x="777" y="281" width="652.500" height="688" fill="#fff5d9"/><g clip-path="url(#ccv)"><path d="M1193.7 742.4C1195.18 742.03 1200.02 742.78 1202.6 740.2C1205.18 737.62 1207.72 732.1 1209.2 726.9C1210.68 721.7 1210.93 716.42 1211.5 709C1212.07 701.58 1212.42 686.83 1212.6 682.4C1213.9 684.62 1218 689.4 1220.4 695.7C1222.8 702 1225.9 716.12 1227 720.2C1228.12 718.33 1231.65 714.93 1233.7 709C1235.75 703.07 1238.93 693.48 1239.3 684.6C1239.67 675.72 1237.02 663.48 1235.9 655.7C1234.78 647.92 1233.15 640.87 1232.6 637.9C1235 639.38 1242.37 642.35 1247 646.8C1251.63 651.25 1257.05 658.67 1260.4 664.6C1263.75 670.53 1265.8 677.22 1267.1 682.4C1268.4 687.58 1268.02 693.48 1268.2 695.7C1270.23 694.58 1277.25 691.97 1280.4 689C1283.55 686.03 1285.8 681.05 1287.1 677.9C1288.4 674.75 1288.02 671.4 1288.2 670.1C1289.5 673.63 1293.97 684.07 1296 691.3C1298.03 698.53 1300.03 706.83 1300.4 713.5C1300.77 720.17 1300.23 724.62 1298.2 731.3C1296.17 737.98 1289.87 749.88 1288.2 753.6C1289.5 754.15 1293.4 757.83 1296 756.9C1298.6 755.97 1302.5 749.48 1303.8 748C1303.8 751.15 1304.73 760.63 1303.8 766.9C1302.87 773.17 1300.98 779.52 1298.2 785.6C1295.42 791.68 1291.55 799.13 1287.1 803.4C1282.65 807.67 1274.1 809.9 1271.5 811.2C1272.62 812.5 1275.42 817.88 1278.2 819C1280.98 820.12 1286.53 818.08 1288.2 817.9C1287.27 819.93 1285.75 826.22 1282.6 830.1C1279.45 833.98 1274.12 838.78 1269.3 841.2C1264.48 843.62 1258.88 844.6 1253.7 844.6C1248.52 844.6 1242.15 843.3 1238.2 841.2C1234.25 839.1 1231.37 833.53 1230 832L1205 790L1193.7 742.4Z" fill="#feae1f" stroke="#1c1408" stroke-width="1.700" stroke-linejoin="round"/><path d="M1140 628C1143.75 633.35 1156.15 651.03 1162.5 660.1C1168.85 669.17 1174.02 674.98 1178.1 682.4C1182.18 689.82 1185.15 697.55 1187 704.6C1188.85 711.65 1189.2 718.97 1189.2 724.7C1189.2 730.43 1187.37 736.62 1187 739L1150 712L1105 676L1140 628Z" fill="#feae1f" stroke="#1c1408" stroke-width="1.700" stroke-linejoin="round"/><path d="M953.4 694L973.8 734L980 715L968 686L953.4 694Z" fill="#feae1f" stroke="#1c1408" stroke-width="1.700" stroke-linejoin="round"/><path d="M982.3 832C980.82 837.25 976 852.68 973.4 863.5C970.8 874.32 968.18 885.78 966.7 896.9C965.22 908.02 964.5 917.18 964.5 930.2C964.5 943.22 966.33 967.53 966.7 975L1209 975C1210.9 971.62 1217.02 962.17 1220.4 954.7C1223.78 947.23 1226.72 939.83 1229.3 930.2C1231.88 920.57 1234.62 908.02 1235.9 896.9C1237.18 885.78 1237.73 874.27 1237 863.5C1236.27 852.73 1233.9 841.95 1231.5 832.3C1229.1 822.65 1225.57 813.75 1222.6 805.6C1219.63 797.45 1216.63 790.17 1213.7 783.4C1210.77 776.63 1206.45 768.07 1205 765L982.3 832Z" fill="#feae1f" stroke="#1c1408" stroke-width="1.700" stroke-linejoin="round"/><path d="M1093.5 842.3C1090.92 845.83 1082.82 855.52 1078 863.5C1073.18 871.48 1068.13 880.93 1064.6 890.2C1061.07 899.47 1058.28 910.2 1056.8 919.1C1055.32 928 1055.52 934.78 1055.7 943.6C1055.88 952.42 1057.53 967.27 1057.9 972" fill="none" stroke="#1c1408" stroke-width="1.700" stroke-linecap="round" stroke-linejoin="round"/><path d="M1032.4 850.1C1034.07 852.33 1038.52 859.6 1042.4 863.5C1046.28 867.4 1051.25 870.92 1055.7 873.5C1060.15 876.08 1066.87 878.08 1069.1 879" fill="none" stroke="#1c1408" stroke-width="1.700" stroke-linecap="round" stroke-linejoin="round"/><path d="M977.2 548L979 570.8L972.8 575.3C975.47 576.93 982.58 582.88 988.8 585.1C995.02 587.32 1002.98 588.9 1010.1 588.6C1017.22 588.3 1025.57 587.15 1031.5 583.3C1037.43 579.45 1043.33 568.47 1045.7 565.5L1043.1 563.7L1042.2 543L977.2 548Z" fill="#feae1f" stroke="#1c1408" stroke-width="1.700" stroke-linejoin="round"/><path d="M972.8 575.3C975.47 576.93 982.58 582.88 988.8 585.1C995.02 587.32 1002.98 588.9 1010.1 588.6C1017.22 588.3 1025.57 587.15 1031.5 583.3C1037.43 579.45 1043.33 568.47 1045.7 565.5C1049.58 565.7 1057.68 563.17 1069 566.7C1080.32 570.23 1103.58 580.4 1113.6 586.7C1123.62 593 1123.55 598.2 1129.1 604.5C1134.65 610.8 1143.93 621.17 1146.9 624.5C1146.35 627.85 1145.45 638.28 1143.6 644.6C1141.75 650.92 1139.32 657.58 1135.8 662.4C1132.28 667.22 1126.58 671.1 1122.5 673.5C1118.42 675.9 1113.17 676.25 1111.3 676.8C1115.02 679.58 1126.18 688.13 1133.6 693.5C1141.02 698.87 1148.38 703.43 1155.8 709C1163.22 714.57 1171.42 720.95 1178.1 726.9C1184.78 732.85 1190.33 738.77 1195.9 744.7C1201.47 750.63 1207.62 758.47 1211.5 762.5C1215.38 766.53 1217.92 767.83 1219.2 768.9C1217.92 771.32 1215.75 778.38 1211.5 783.4C1207.25 788.42 1201.12 793.43 1193.7 799C1186.28 804.57 1177.02 811.25 1167 816.8C1156.98 822.35 1145.85 828.05 1133.6 832.3C1121.35 836.55 1106.48 840.07 1093.5 842.3C1080.52 844.53 1067.55 845.32 1055.7 845.7C1043.85 846.08 1034.63 846.08 1022.4 844.6C1010.17 843.12 993.07 841.07 982.3 836.8C971.53 832.53 963.92 824.75 957.8 819C951.68 813.25 947.63 805.08 945.6 802.3C948.38 798.4 958.03 787.25 962.3 778.9C966.57 770.55 968.98 760.13 971.2 752.2C973.42 744.27 975.23 738.5 975.6 731.3C975.97 724.1 974.88 716.22 973.4 709C971.92 701.78 967.82 691.5 966.7 688C964.48 688.92 958.4 692.58 953.4 693.5C948.4 694.42 939.48 693.5 936.7 693.5C936.15 687.93 934.33 670.12 933.4 660.1C932.47 650.08 931.28 640.82 931.1 633.4C930.92 625.98 930.82 621.53 932.3 615.6C933.78 609.67 936.12 602.98 940 597.8C943.88 592.62 950.13 588.25 955.6 584.5C961.07 580.75 969.93 576.83 972.8 575.3Z" fill="#b40017" stroke="#1c1408" stroke-width="1.700" stroke-linejoin="round"/><path d="M955.2 603.4C954.9 606.92 953.33 616.53 953.4 624.5C953.47 632.47 953.38 640.82 955.6 651.2C957.82 661.58 964.85 680.87 966.7 686.8" fill="none" stroke="#1c1408" stroke-width="1.700" stroke-linecap="round" stroke-linejoin="round"/><path d="M1068 610.1C1069.3 613.25 1072.28 622.15 1075.8 629C1079.32 635.85 1083.18 643.23 1089.1 651.2C1095.02 659.17 1107.6 672.53 1111.3 676.8" fill="none" stroke="#1c1408" stroke-width="1.700" stroke-linecap="round" stroke-linejoin="round"/><path d="M926.5 284C926.8 286.7 926.82 294.82 928.3 300.2C929.78 305.58 931.85 311.85 935.4 316.3C938.95 320.75 944.55 324.88 949.6 326.9C954.65 328.92 960.05 328.4 965.7 328.4C971.35 328.4 978.17 326.4 983.5 326.9C988.83 327.4 993.7 329.17 997.7 331.4C1001.7 333.63 1005.87 338.82 1007.5 340.3C1008.08 338.37 1009.23 331.97 1011 328.7C1012.77 325.43 1015.72 322.48 1018.1 320.7C1020.48 318.92 1023.07 317.85 1025.3 318C1027.53 318.15 1028.68 318.03 1031.5 321.6C1034.32 325.17 1038.35 333.17 1042.2 339.4C1046.05 345.63 1050.45 353.67 1054.6 359C1058.75 364.33 1063.53 368.43 1067.1 371.4C1070.67 374.37 1073.33 376.35 1076 376.8C1078.67 377.25 1080.73 376.18 1083.1 374.1C1085.47 372.02 1087.98 368 1090.2 364.3C1092.42 360.6 1094.92 354.27 1096.4 351.9C1097.88 349.53 1098.65 350.4 1099.1 350.1C1099.45 351.58 1100.6 354.55 1101.2 359C1101.8 363.45 1102.6 370.87 1102.7 376.8C1102.8 382.73 1102.4 389.87 1101.8 394.6C1101.2 399.33 1099.55 403.43 1099.1 405.2C1102.07 408.18 1110.37 415.07 1116.9 423.1C1123.43 431.13 1131.18 443.9 1138.3 453.4C1145.42 462.9 1154.27 471.8 1159.6 480.1C1164.93 488.4 1168.07 495.78 1170.3 503.2C1172.53 510.62 1173.3 517.18 1173 524.6C1172.7 532.02 1171.33 540.58 1168.5 547.7C1165.67 554.82 1161.03 561.97 1156 567.3C1150.97 572.63 1144.82 576.73 1138.3 579.7C1131.78 582.67 1123.43 584.5 1116.9 585.1C1110.37 585.7 1105.03 585.08 1099.1 583.3C1093.17 581.52 1086.05 578.27 1081.3 574.4C1076.55 570.53 1073.27 565.45 1070.6 560.1C1067.93 554.75 1066.48 547.98 1065.3 542.3C1064.12 536.62 1063.8 528.72 1063.5 526C1062.02 527.83 1059.05 533.68 1054.6 537C1050.15 540.32 1044.22 543.38 1036.8 545.9C1029.38 548.42 1018.7 550.92 1010.1 552.1C1001.5 553.28 992.9 553.65 985.2 553C977.5 552.35 967.45 549 963.9 548.2C963.6 549.6 963.88 553.13 962.1 556.6C960.32 560.07 957.65 565.45 953.2 569C948.75 572.55 941.33 576.12 935.4 577.9C929.47 579.68 923.83 580.58 917.6 579.7C911.37 578.82 903.78 576.15 898 572.6C892.22 569.05 886.9 564.03 882.9 558.4C878.9 552.77 875.78 545.92 874 538.8C872.22 531.68 871.45 523.42 872.2 515.7C872.95 507.98 874.78 500.52 878.5 492.5C882.22 484.48 887.98 477.08 894.5 467.6C901.02 458.12 911.08 446.53 917.6 435.6C924.12 424.67 930.33 408.55 933.6 402C936.87 395.45 936.6 397.25 937.2 396.3C935.12 393.05 927.82 384.52 924.7 376.8C921.58 369.08 919.68 358.02 918.5 350C917.32 341.98 917.3 336.1 917.6 328.7C917.9 321.3 918.82 313.05 920.3 305.6C921.78 298.15 925.47 287.6 926.5 284Z" fill="#feae1f" stroke="#1c1408" stroke-width="1.700" stroke-linejoin="round"/><path d="M937.2 396.3C940.47 397.63 950.57 402.97 956.8 404.3C963.03 405.63 969.87 404.73 974.6 404.3C979.33 403.87 983.43 402.13 985.2 401.7" fill="none" stroke="#1c1408" stroke-width="1.700" stroke-linecap="round" stroke-linejoin="round"/><path d="M1007.5 340.3C1007.05 342.52 1004.95 348.72 1004.8 353.6C1004.65 358.48 1005.42 364.7 1006.6 369.6C1007.78 374.5 1011.02 380.77 1011.9 383" fill="none" stroke="#1c1408" stroke-width="1.700" stroke-linecap="round" stroke-linejoin="round"/><path d="M1063.5 405.3C1066.17 409.17 1076.08 421.08 1079.5 428.5C1082.92 435.92 1083.7 443.28 1084 449.8C1084.3 456.32 1082.93 461.67 1081.3 467.6C1079.67 473.53 1076.72 478.87 1074.2 485.4C1071.68 491.93 1067.98 500.03 1066.2 506.8C1064.42 513.57 1063.95 522.8 1063.5 526" fill="none" stroke="#1c1408" stroke-width="1.700" stroke-linecap="round" stroke-linejoin="round"/><path d="M917.6 471.2C916.72 473.57 912.88 480.07 912.3 485.4C911.72 490.73 912.32 496.97 914.1 503.2C915.88 509.43 918.27 516.57 923 522.8C927.73 529.03 935.68 536.37 942.5 540.6C949.32 544.83 960.33 546.93 963.9 548.2" fill="none" stroke="#1c1408" stroke-width="1.700" stroke-linecap="round" stroke-linejoin="round"/><ellipse cx="939.5" cy="483.3" rx="10" ry="8.200" fill="#ff7f27" opacity=".9"/><ellipse cx="1044" cy="486.300" rx="16" ry="9" fill="#ff7f27" opacity=".9"/><path d="M949.6 476.5C949.17 477.98 947 481.83 947 485.4C947 488.97 947.97 494.78 949.6 497.9C951.23 501.02 954.12 503.37 956.8 504.1C959.48 504.83 964.22 502.6 965.7 502.3L975 470C972.55 470.2 964.53 470.12 960.3 471.2C956.07 472.28 951.38 475.62 949.6 476.5Z" fill="#feae1f" /><defs><clipPath id="cle"><path d="M977.2 417.8C975.67 416.92 971.12 413.58 968 412.5C964.88 411.42 962 410.38 958.5 411.3C955 412.22 950.17 414.88 947 418C943.83 421.12 941.28 425.67 939.5 430C937.72 434.33 936.55 439.33 936.3 444C936.05 448.67 936.88 453.83 938 458C939.12 462.17 941.07 465.92 943 469C944.93 472.08 948.5 475.25 949.6 476.5C951.38 475.62 956.13 472.53 960.3 471.2C964.47 469.87 972.22 468.95 974.6 468.5L977.2 417.8Z"/></clipPath><clipPath id="cre"><ellipse cx="1040.800" cy="445" rx="22.700" ry="30.800"/></clipPath><clipPath id="clp"><ellipse cx="972.500" cy="446" rx="20" ry="31"/></clipPath></defs><path d="M977.2 417.8C975.67 416.92 971.12 413.58 968 412.5C964.88 411.42 962 410.38 958.5 411.3C955 412.22 950.17 414.88 947 418C943.83 421.12 941.28 425.67 939.5 430C937.72 434.33 936.55 439.33 936.3 444C936.05 448.67 936.88 453.83 938 458C939.12 462.17 941.07 465.92 943 469C944.93 472.08 948.5 475.25 949.6 476.5C951.38 475.62 956.13 472.53 960.3 471.2C964.47 469.87 972.22 468.95 974.6 468.5L977.2 417.8Z" fill="#fffdf6" stroke="#1c1408" stroke-width="1.700" stroke-linejoin="round"/><g clip-path="url(#cle)"><ellipse cx="972.500" cy="446" rx="20" ry="31" fill="#4a3b10" stroke="#1c1408" stroke-width="1.700"/><g clip-path="url(#clp)"><ellipse cx="976" cy="473" rx="23" ry="22.500" fill="#ffd452"/></g><ellipse cx="972.800" cy="428.400" rx="4.800" ry="8.200" fill="#fff"/></g><path d="M977.2 417.8C975.67 416.92 971.12 413.58 968 412.5C964.88 411.42 962 410.38 958.5 411.3C955 412.22 950.17 414.88 947 418C943.83 421.12 941.28 425.67 939.5 430C937.72 434.33 936.55 439.33 936.3 444C936.05 448.67 936.88 453.83 938 458C939.12 462.17 941.07 465.92 943 469C944.93 472.08 948.5 475.25 949.6 476.5C951.38 475.62 956.13 472.53 960.3 471.2C964.47 469.87 972.22 468.95 974.6 468.5L977.2 417.8Z" fill="none" stroke="#1c1408" stroke-width="1.700" stroke-linecap="round" stroke-linejoin="round"/><ellipse cx="952.300" cy="442.400" rx="6.200" ry="2.700" fill="#fff"/><ellipse cx="1034.500" cy="445" rx="32.300" ry="34.300" fill="#fffdf6" stroke="#1c1408" stroke-width="1.700"/><ellipse cx="1040.800" cy="445" rx="22.700" ry="30.800" fill="#4a3b10" stroke="#1c1408" stroke-width="1.700"/><g clip-path="url(#cre)"><ellipse cx="1045" cy="479" rx="25" ry="25" fill="#ffd452"/></g><ellipse cx="1052.500" cy="432.900" rx="10.300" ry="12" fill="#fff"/><ellipse cx="1020.800" cy="442.700" rx="6.500" ry="2.700" fill="#fff"/><path d="M949.6 476.5C949.17 477.98 947 481.83 947 485.4C947 488.97 947.97 494.78 949.6 497.9C951.23 501.02 954.12 503.37 956.8 504.1C959.48 504.83 962.73 503.05 965.7 502.3C968.67 501.55 971.35 499.6 974.6 499.6C977.85 499.6 981.05 500.95 985.2 502.3C989.35 503.65 995.35 507.1 999.5 507.7C1003.65 508.3 1007.13 507.25 1010.1 505.9C1013.07 504.55 1016.1 502.42 1017.3 499.6C1018.5 496.78 1017.3 490.77 1017.3 489" fill="none" stroke="#1c1408" stroke-width="1.700" stroke-linecap="round" stroke-linejoin="round"/><path d="M965.300 482.700Q971 478 978.100 477.900Q985 478.500 988.800 482.700Q983 491 974.600 493.400Q968 489 965.300 482.700Z" fill="#ff7f27" stroke="#1c1408" stroke-width="1.300"/></g><defs><filter id="bl"><feGaussianBlur stdDeviation=".7"/></filter></defs><g filter="url(#bl)"><path d="M685 327c4 4 9 7 15 7l2-4c-6 0-11-2-15-5z" fill="#e0a63c"/><path d="M701 340l-3 30c-1 4 0 6 3 6l5-1 1-34z" fill="#e6b04e"/><ellipse cx="699" cy="375" rx="6.500" ry="4" fill="#e2a844"/><path d="M708 342l4 32c1 4 4 5 8 4l-6-36z" fill="#eab454"/><ellipse cx="717.500" cy="378" rx="9" ry="4.200" fill="#e6ac48"/><path d="M698 301c5-3 13-2 16 2l3 26c-5 4-13 4-19 1-3-9-3-21 0-29z" fill="#b2483a"/><path d="M697 305c-2 8-2 16 2 24l4 6 3-2-4-8c-1-8 0-14-1-20z" fill="#e3a640"/><ellipse cx="707" cy="338" rx="5" ry="7" fill="#f0ece8" transform="rotate(-25 707 338)"/><ellipse cx="722" cy="330" rx="6" ry="3.200" fill="#eeeae6" transform="rotate(-15 722 330)"/><ellipse cx="710.500" cy="284.500" rx="9.800" ry="12.700" fill="#ecb652"/><path d="M701 282c-1 8 0 14 3 17l5-3c-2-5-2-10-1-15z" fill="#e0a23c"/><ellipse cx="721" cy="292.500" rx="6" ry="4.200" fill="#efb650"/><ellipse cx="714" cy="286" rx="1.800" ry="1.500" fill="#5a2c14"/></g><circle cx="702" cy="442" r="24.500" fill="#fdfdfd" stroke="#4a4a4a" stroke-width="2"/><defs><clipPath id="cav"><circle cx="702" cy="442" r="23.500"/></clipPath></defs><g clip-path="url(#cav)"><path d="M692 430c2-6 9-8 15-6s8 7 8 12l8 3c2 3 1 7-2 9l-7 3-1 6-1 12h-15l-1-12c-5-2-8-8-7-15z" fill="#f9a91c" stroke="#3a2a10" stroke-width="1"/><path d="M690 432c-3 6-3 16-1 24s5 10 7 8l2-14z" fill="#f9a91c" stroke="#3a2a10" stroke-width="1"/><ellipse cx="698.500" cy="441" rx="2.200" ry="4" fill="#222"/><ellipse cx="708" cy="440" rx="2" ry="3.500" fill="#222"/><ellipse cx="719.500" cy="447" rx="3" ry="2.400" fill="#f06a28"/><ellipse cx="700" cy="451" rx="3" ry="2" fill="#ff8a50"/><path d="M708 455l8-3" stroke="#3a2a10" stroke-width="1" fill="none"/></g><path d="M1470.500 883.500v20M1460.500 893.500h20" stroke="#fff" stroke-width="3.400"/><path d="M1470.500 883.500v20M1460.500 893.500h20" stroke="#111" stroke-width="1.200"/><circle cx="1470.500" cy="893.500" r="1.300" fill="#888"/><path d="M1486 900h12.500l6.500 6.200 3.500 8.800-.6 6.200-5.600 6.800h-8l-9.500-9.400-5-.7-2-4.300.8-6.200z" fill="#050505" stroke="#fff" stroke-width="1.500" stroke-linejoin="round"/><path d="M1481.500 910.500l6-6.500h9.500l2 2.500-5.500 5.500-8.500 1-2.500 3z" fill="none" stroke="#fff" stroke-width="1.400" stroke-linejoin="round"/><path d="M1481 915.500l2-3.500 9-1.200-7 1.800z" fill="#fff" stroke="#fff" stroke-width="1"/></svg>
<div class="abs" style="left:1604px;top:186.5px;width:181px;height:31px;background:#434343;border:1px solid #383838;border-bottom:none;border-radius:4px 4px 0 0"></div>
<div class="abs" style="left:1604px;top:217px;width:378px;height:1px;background:#3a3a3a;"></div>
<div class="abs" style="left:1786px;top:183px;width:195px;height:35.5px;background:#4a4a4a;border:1px solid #3a3a3a;border-bottom:none;border-radius:4px 4px 0 0"></div>
<div class="t" style="left:1621.5px;top:192.8px;font-size:16px;letter-spacing:-0.2px;line-height:20px;color:#dedede;">Specific Colour Se…</div>
<div class="t" style="left:1804px;top:191.3px;font-size:16px;letter-spacing:-0.26px;line-height:20px;color:#dedede;">Advanced Colour Se…</div>
<svg width="24" height="24" viewBox="0 0 24 24" style="left:1605.2px;top:219.5px;"><circle cx="12" cy="12" r="11.200" fill="none" stroke="#dcdcdc" stroke-width="1.700"/><rect x="6.500" y="11" width="11" height="5.200" fill="#dcdcdc"/><path d="M9.200 11.500v-2.200a2.800 2.800 0 0 1 5.600 0v.5" fill="none" stroke="#dcdcdc" stroke-width="1.700"/></svg>
<div class="t" style="left:1638.5px;top:222.3px;font-size:16px;letter-spacing:-0.15px;line-height:20px;color:#dedede;">Advanced Colour Selector</div>
<svg width="21" height="20" viewBox="0 0 21 20" style="left:1925px;top:221.5px;"><rect x="7.500" y="1" width="12.500" height="11" fill="none" stroke="#dcdcdc" stroke-width="1.800"/><rect x="1" y="8" width="12" height="11" fill="#484848" stroke="#dcdcdc" stroke-width="1.800"/></svg>
<svg width="15" height="15" viewBox="0 0 15 15" style="left:1960px;top:224px;"><path d="M.8 .8l13.400 13.400M14.200 .8l-13.400 13.400" stroke="#dcdcdc" stroke-width="1.900"/></svg>
<svg width="24" height="24" viewBox="0 0 24 24" style="left:1616px;top:256px;"><rect x="1" y="1" width="22" height="22" fill="none" stroke="#dcdcdc" stroke-width="1.800"/><path d="M1 4.500h22" stroke="#dcdcdc" stroke-width="2.500"/><path d="M6 8.500v11" stroke="#dcdcdc" stroke-width="2.400"/><path d="M10 9.500h9.500M10 14h9.500M10 18.500h9.500" stroke="#dcdcdc" stroke-width="2"/></svg>
<div class="abs" style="left:1957.5px;top:245px;width:24px;height:22px;background:#3a3a3a;"></div>
<svg width="18" height="18" viewBox="0 0 18 18" style="left:1960.5px;top:247.5px;"><circle cx="9" cy="9" r="7.800" fill="none" stroke="#dcdcdc" stroke-width="2"/><path d="M3.500 3.500l11 11" stroke="#dcdcdc" stroke-width="2"/></svg>
<div class="abs" style="left:1957.5px;top:267px;width:24px;height:25px;background:#fff3d7;"></div>
<div class="abs" style="left:1957.5px;top:292px;width:24px;height:22.5px;background:#ffffff;"></div>
<div class="abs" style="left:1957.5px;top:314.5px;width:24px;height:23px;background:#4a3b10;"></div>
<div class="abs" style="left:1957.5px;top:337.5px;width:24px;height:24px;background:#ffd452;"></div>
<div class="abs" style="left:1957.5px;top:361.5px;width:24px;height:23.5px;background:#ffad20;"></div>
<div class="abs" style="left:1957.5px;top:385px;width:24px;height:47.5px;background:#ff7f27;"></div>
<div class="abs" style="left:1957.5px;top:432.5px;width:24px;height:24px;background:#000000;"></div>
<div class="abs" style="left:1957.5px;top:456.5px;width:24px;height:22.5px;background:#b0001b;"></div>
<div class="abs" style="left:1633.5px;top:246px;width:292px;height:292px;border-radius:50%;background:conic-gradient(from 270deg,#ff0000,#ffff00,#00ff00,#00ffff,#0000ff,#ff00ff,#ff0000);-webkit-mask:radial-gradient(circle,transparent 122.5px,#000 123.5px);mask:radial-gradient(circle,transparent 122.5px,#000 123.5px)"></div>
<svg width="2000" height="1124" viewBox="0 0 2000 1124" style="left:0;top:0;pointer-events:none"><defs><linearGradient id="gw" gradientUnits="userSpaceOnUse" x1="1672.98" y1="453.5" x2="1832.76" y2="361.25"><stop offset="0" stop-color="#fff"/><stop offset="1" stop-color="#000"/></linearGradient><linearGradient id="gh" gradientUnits="userSpaceOnUse" x1="1886.02" y1="453.5" x2="1726.24" y2="361.25"><stop offset="0" stop-color="#ffb400"/><stop offset="1" stop-color="#000"/></linearGradient></defs><g style="isolation:isolate"><polygon points="1779.5,270.85 1674.58,452.58 1884.42,452.58" fill="#000"/><polygon points="1779.5,269 1672.98,453.5 1886.02,453.5" fill="url(#gw)" style="mix-blend-mode:plus-lighter"/><polygon points="1779.5,269 1672.98,453.5 1886.02,453.5" fill="url(#gh)" style="mix-blend-mode:plus-lighter"/></g><path d="M1679.500 284l15.500 17" stroke="#2a2a2a" stroke-width="1.600"/><path d="M1680.800 282.800l15.500 17" stroke="#e8e8e8" stroke-width="1"/><circle cx="1702.500" cy="452.500" r="6.500" fill="none" stroke="#111" stroke-width="1.400"/><circle cx="1702.500" cy="452.500" r="5.200" fill="none" stroke="#eee" stroke-width="1"/></svg>
<div class="abs" style="left:1604.5px;top:540.5px;width:353px;height:14.5px;background:#fff3d7;background-image:linear-gradient(90deg,#ffe0dc 0%,#fff3d7 50%,#f3ffd9 100%)"></div>
<div class="abs" style="left:1774.5px;top:540px;width:13.5px;height:15.5px;background:#fff3d7;border:2px solid #444;box-shadow:0 0 0 .5px #ccc inset"></div>
<div class="abs" style="left:1604.5px;top:557px;width:353px;height:14px;background:#fff3d7;background-image:linear-gradient(90deg,#7a7a7a 0%,#e6e2d6 40%,#fff3d7 50%,#ffd84d 100%)"></div>
<div class="abs" style="left:1774.5px;top:556.5px;width:13.5px;height:15px;background:#fff3d7;border:2px solid #444;box-shadow:0 0 0 .5px #ccc inset"></div>
<div class="abs" style="left:1604.5px;top:572.5px;width:353px;height:15px;background:#fff3d7;background-image:linear-gradient(90deg,#6a5610 0%,#c9b878 30%,#fff3d7 50%,#ffffff 78%,#ffffff 100%)"></div>
<div class="abs" style="left:1774.5px;top:572px;width:13.5px;height:16px;background:#fff3d7;border:2px solid #444;box-shadow:0 0 0 .5px #ccc inset"></div>
<div class="abs" style="left:1604.5px;top:590px;width:377px;height:24.5px;background:#3f3f3f;"></div>
<svg width="19" height="19" viewBox="0 0 19 19" style="left:1606.5px;top:593.5px;"><path d="M2.500 11.500a7 7 0 0 1 11.500-7" fill="none" stroke="#dcdcdc" stroke-width="2"/><path d="M16.500 7.500a7 7 0 0 1-11.500 7" fill="none" stroke="#dcdcdc" stroke-width="2"/><path d="M10.500 5l6 .5-.5-5.500z" fill="#dcdcdc"/><path d="M8.500 14l-6-.5.500 5.500z" fill="#dcdcdc"/></svg>
<svg width="26" height="2" viewBox="0 0 26 2" style="left:1783.5px;top:620px;"><rect x="0" y="0" width="2" height="2" fill="#8a8a8a"/><rect x="4.6" y="0" width="2" height="2" fill="#8a8a8a"/><rect x="9.2" y="0" width="2" height="2" fill="#8a8a8a"/><rect x="13.8" y="0" width="2" height="2" fill="#8a8a8a"/><rect x="18.4" y="0" width="2" height="2" fill="#8a8a8a"/><rect x="23" y="0" width="2" height="2" fill="#8a8a8a"/></svg>
<svg width="2" height="26" viewBox="0 0 2 26" style="left:1599.5px;top:612px;"><rect x="0" y="0" width="2" height="2" fill="#8a8a8a"/><rect x="0" y="4.6" width="2" height="2" fill="#8a8a8a"/><rect x="0" y="9.2" width="2" height="2" fill="#8a8a8a"/><rect x="0" y="13.8" width="2" height="2" fill="#8a8a8a"/><rect x="0" y="18.4" width="2" height="2" fill="#8a8a8a"/><rect x="0" y="23" width="2" height="2" fill="#8a8a8a"/></svg>
<div class="abs" style="left:1736px;top:630px;width:98px;height:31px;background:#434343;border:1px solid #383838;border-bottom:none;border-radius:4px 4px 0 0"></div>
<div class="abs" style="left:1604px;top:660.5px;width:378px;height:1px;background:#3a3a3a;"></div>
<div class="abs" style="left:1605px;top:626px;width:128px;height:36px;background:#4a4a4a;border:1px solid #3a3a3a;border-bottom:none;border-radius:4px 4px 0 0"></div>
<div class="t" style="left:1621.5px;top:634.8px;font-size:16px;letter-spacing:0.09px;line-height:20px;color:#dedede;">Undo History</div>
<div class="t" style="left:1752px;top:636.3px;font-size:16px;letter-spacing:-0.12px;line-height:20px;color:#dedede;">Recorder</div>
<svg width="24" height="24" viewBox="0 0 24 24" style="left:1605.2px;top:662.5px;"><circle cx="12" cy="12" r="11.200" fill="none" stroke="#dcdcdc" stroke-width="1.700"/><rect x="6.500" y="11" width="11" height="5.200" fill="#dcdcdc"/><path d="M9.200 11.500v-2.200a2.800 2.800 0 0 1 5.600 0v.5" fill="none" stroke="#dcdcdc" stroke-width="1.700"/></svg>
<div class="t" style="left:1638.5px;top:665.3px;font-size:16px;letter-spacing:0.05px;line-height:20px;color:#dedede;">Undo History</div>
<svg width="21" height="20" viewBox="0 0 21 20" style="left:1925px;top:665px;"><rect x="7.500" y="1" width="12.500" height="11" fill="none" stroke="#dcdcdc" stroke-width="1.800"/><rect x="1" y="8" width="12" height="11" fill="#484848" stroke="#dcdcdc" stroke-width="1.800"/></svg>
<svg width="15" height="15" viewBox="0 0 15 15" style="left:1960px;top:667.5px;"><path d="M.8 .8l13.400 13.400M14.200 .8l-13.400 13.400" stroke="#dcdcdc" stroke-width="1.900"/></svg>
<div class="abs" style="left:1605px;top:686.500px;width:376.500px;height:375px;background:#3d3d3d;overflow:hidden">
<div class="abs" style="left:0px;top:325px;width:356.5px;height:50px;background:#56799f;"></div>
<svg width="47" height="47" viewBox="0 0 47 47" style="left:4px;top:-21.5px;overflow:hidden"><rect width="47" height="47" fill="#d9d9d9"/><path d="M17 38l16 1 7-6-1-6 5-2.500 3 5.500v17h-30z" fill="#fdae1c"/><path d="M15 21l14-1 7 7 4 7-7 5.500-15-.5-4-7 1-6z" fill="#c50d1a"/><path d="M8.500 14l4.500-5 1-6 4 3 6-3 3 5 6 3 1 7-4 4-8 .5-7-1.500-4-4z" fill="#fdae1c"/><g fill="#1a1a1a"><rect x="13" y="2.500" width="2" height="2"/><rect x="23" y="3" width="2" height="2"/><rect x="8" y="13" width="2" height="2"/><rect x="21.500" y="11" width="2.500" height="3.500"/><rect x="25" y="12" width="2" height="3"/><rect x="16" y="9" width="2" height="2"/><rect x="16" y="19.500" width="2" height="2"/><rect x="30" y="20" width="2" height="2"/><rect x="24" y="21" width="2" height="2"/><rect x="38" y="30" width="2" height="2"/><rect x="42" y="25.500" width="2" height="2"/><rect x="27" y="38" width="2" height="2"/><rect x="14" y="31" width="2" height="2"/><rect x="33" y="24" width="2" height="2"/></g><rect x="36" y="15" width="1.500" height="3" fill="#aaa"/><rect x="39" y="14" width="1.500" height="3" fill="#bbb"/></svg>
<div class="t" style="left:59.8px;top:-7.2px;font-size:16px;letter-spacing:-0.15px;line-height:20px;color:#e2e2e2;">Deselect</div>
<svg width="47" height="47" viewBox="0 0 47 47" style="left:4px;top:28px;overflow:hidden"><rect width="47" height="47" fill="#d9d9d9"/><path d="M17 38l16 1 7-6-1-6 5-2.500 3 5.500v17h-30z" fill="#fdae1c"/><path d="M15 21l14-1 7 7 4 7-7 5.500-15-.5-4-7 1-6z" fill="#c50d1a"/><path d="M8.500 14l4.500-5 1-6 4 3 6-3 3 5 6 3 1 7-4 4-8 .5-7-1.500-4-4z" fill="#fdae1c"/><g fill="#1a1a1a"><rect x="13" y="2.500" width="2" height="2"/><rect x="23" y="3" width="2" height="2"/><rect x="8" y="13" width="2" height="2"/><rect x="21.500" y="11" width="2.500" height="3.500"/><rect x="25" y="12" width="2" height="3"/><rect x="16" y="9" width="2" height="2"/><rect x="16" y="19.500" width="2" height="2"/><rect x="30" y="20" width="2" height="2"/><rect x="24" y="21" width="2" height="2"/><rect x="38" y="30" width="2" height="2"/><rect x="42" y="25.500" width="2" height="2"/><rect x="27" y="38" width="2" height="2"/><rect x="14" y="31" width="2" height="2"/><rect x="33" y="24" width="2" height="2"/></g><rect x="36" y="15" width="1.500" height="3" fill="#aaa"/><rect x="39" y="14" width="1.500" height="3" fill="#bbb"/></svg>
<div class="t" style="left:59.8px;top:42.3px;font-size:16px;letter-spacing:-0.4px;line-height:20px;color:#e2e2e2;">Add Layer</div>
<svg width="47" height="47" viewBox="0 0 47 47" style="left:4px;top:77.8px;overflow:hidden"><rect width="47" height="47" fill="#d9d9d9"/><path d="M17 38l16 1 7-6-1-6 5-2.500 3 5.500v17h-30z" fill="#fdae1c"/><path d="M15 21l14-1 7 7 4 7-7 5.500-15-.5-4-7 1-6z" fill="#c50d1a"/><path d="M8.500 14l4.500-5 1-6 4 3 6-3 3 5 6 3 1 7-4 4-8 .5-7-1.500-4-4z" fill="#fdae1c"/><g fill="#1a1a1a"><rect x="13" y="2.500" width="2" height="2"/><rect x="23" y="3" width="2" height="2"/><rect x="8" y="13" width="2" height="2"/><rect x="21.500" y="11" width="2.500" height="3.500"/><rect x="25" y="12" width="2" height="3"/><rect x="16" y="9" width="2" height="2"/><rect x="16" y="19.500" width="2" height="2"/><rect x="30" y="20" width="2" height="2"/><rect x="24" y="21" width="2" height="2"/><rect x="38" y="30" width="2" height="2"/><rect x="42" y="25.500" width="2" height="2"/><rect x="27" y="38" width="2" height="2"/><rect x="14" y="31" width="2" height="2"/><rect x="33" y="24" width="2" height="2"/></g><rect x="36" y="15" width="1.500" height="3" fill="#aaa"/><rect x="39" y="14" width="1.500" height="3" fill="#bbb"/></svg>
<div class="t" style="left:59.8px;top:92.1px;font-size:16px;letter-spacing:-0.18px;line-height:20px;color:#e2e2e2;">Move Nodes</div>
<svg width="47" height="47" viewBox="0 0 47 47" style="left:4px;top:127.5px;overflow:hidden"><rect width="47" height="47" fill="#d9d9d9"/><path d="M17 38l16 1 7-6-1-6 5-2.500 3 5.500v17h-30z" fill="#fdae1c"/><path d="M15 21l14-1 7 7 4 7-7 5.500-15-.5-4-7 1-6z" fill="#c50d1a"/><path d="M8.500 14l4.500-5 1-6 4 3 6-3 3 5 6 3 1 7-4 4-8 .5-7-1.500-4-4z" fill="#fdae1c"/><g fill="#1a1a1a"><rect x="13" y="2.500" width="2" height="2"/><rect x="23" y="3" width="2" height="2"/><rect x="8" y="13" width="2" height="2"/><rect x="21.500" y="11" width="2.500" height="3.500"/><rect x="25" y="12" width="2" height="3"/><rect x="16" y="9" width="2" height="2"/><rect x="16" y="19.500" width="2" height="2"/><rect x="30" y="20" width="2" height="2"/><rect x="24" y="21" width="2" height="2"/><rect x="38" y="30" width="2" height="2"/><rect x="42" y="25.500" width="2" height="2"/><rect x="27" y="38" width="2" height="2"/><rect x="14" y="31" width="2" height="2"/><rect x="33" y="24" width="2" height="2"/></g><rect x="36" y="15" width="1.500" height="3" fill="#aaa"/><rect x="39" y="14" width="1.500" height="3" fill="#bbb"/></svg>
<div class="t" style="left:59.8px;top:141.8px;font-size:16px;letter-spacing:-0.07px;line-height:20px;color:#e2e2e2;">Select Contiguous Area</div>
<svg width="47" height="47" viewBox="0 0 47 47" style="left:4px;top:177px;overflow:hidden"><rect width="47" height="47" fill="#d9d9d9"/><path d="M17 38l16 1 7-6-1-6 5-2.500 3 5.500v17h-30z" fill="#fdae1c"/><path d="M15 21l14-1 7 7 4 7-7 5.500-15-.5-4-7 1-6z" fill="#c50d1a"/><path d="M8.500 14l4.500-5 1-6 4 3 6-3 3 5 6 3 1 7-4 4-8 .5-7-1.500-4-4z" fill="#fdae1c"/><g fill="#1a1a1a"><rect x="13" y="2.500" width="2" height="2"/><rect x="23" y="3" width="2" height="2"/><rect x="8" y="13" width="2" height="2"/><rect x="21.500" y="11" width="2.500" height="3.500"/><rect x="25" y="12" width="2" height="3"/><rect x="16" y="9" width="2" height="2"/><rect x="16" y="19.500" width="2" height="2"/><rect x="30" y="20" width="2" height="2"/><rect x="24" y="21" width="2" height="2"/><rect x="38" y="30" width="2" height="2"/><rect x="42" y="25.500" width="2" height="2"/><rect x="27" y="38" width="2" height="2"/><rect x="14" y="31" width="2" height="2"/><rect x="33" y="24" width="2" height="2"/></g><rect x="36" y="15" width="1.500" height="3" fill="#aaa"/><rect x="39" y="14" width="1.500" height="3" fill="#bbb"/></svg>
<div class="t" style="left:59.8px;top:191.3px;font-size:16px;letter-spacing:-0.15px;line-height:20px;color:#e2e2e2;">Deselect</div>
<svg width="47" height="47" viewBox="0 0 47 47" style="left:4px;top:226.8px;overflow:hidden"><rect width="47" height="47" fill="#fff3d7"/><path d="M17 38l16 1 7-6-1-6 5-2.500 3 5.500v17h-30z" fill="#fdae1c"/><path d="M15 21l14-1 7 7 4 7-7 5.500-15-.5-4-7 1-6z" fill="#c50d1a"/><path d="M8.500 14l4.500-5 1-6 4 3 6-3 3 5 6 3 1 7-4 4-8 .5-7-1.500-4-4z" fill="#fdae1c"/><g fill="#1a1a1a"><rect x="13" y="2.500" width="2" height="2"/><rect x="23" y="3" width="2" height="2"/><rect x="8" y="13" width="2" height="2"/><rect x="21.500" y="11" width="2.500" height="3.500"/><rect x="25" y="12" width="2" height="3"/><rect x="16" y="9" width="2" height="2"/><rect x="16" y="19.500" width="2" height="2"/><rect x="30" y="20" width="2" height="2"/><rect x="24" y="21" width="2" height="2"/><rect x="38" y="30" width="2" height="2"/><rect x="42" y="25.500" width="2" height="2"/><rect x="27" y="38" width="2" height="2"/><rect x="14" y="31" width="2" height="2"/><rect x="33" y="24" width="2" height="2"/></g><rect x="0" y="31" width="30" height="11" fill="#dcdcdc"/><rect x="12" y="33" width="18" height="4" fill="#333"/></svg>
<div class="t" style="left:59.8px;top:241.1px;font-size:16px;letter-spacing:0.14px;line-height:20px;color:#e2e2e2;">Flood Fill</div>
<svg width="47" height="47" viewBox="0 0 47 47" style="left:4px;top:276.5px;overflow:hidden"><rect width="47" height="47" fill="#fff3d7"/><path d="M17 38l16 1 7-6-1-6 5-2.500 3 5.500v17h-30z" fill="#fdae1c"/><path d="M15 21l14-1 7 7 4 7-7 5.500-15-.5-4-7 1-6z" fill="#c50d1a"/><path d="M8.500 14l4.500-5 1-6 4 3 6-3 3 5 6 3 1 7-4 4-8 .5-7-1.500-4-4z" fill="#fdae1c"/><g fill="#1a1a1a"><rect x="13" y="2.500" width="2" height="2"/><rect x="23" y="3" width="2" height="2"/><rect x="8" y="13" width="2" height="2"/><rect x="21.500" y="11" width="2.500" height="3.500"/><rect x="25" y="12" width="2" height="3"/><rect x="16" y="9" width="2" height="2"/><rect x="16" y="19.500" width="2" height="2"/><rect x="30" y="20" width="2" height="2"/><rect x="24" y="21" width="2" height="2"/><rect x="38" y="30" width="2" height="2"/><rect x="42" y="25.500" width="2" height="2"/><rect x="27" y="38" width="2" height="2"/><rect x="14" y="31" width="2" height="2"/><rect x="33" y="24" width="2" height="2"/></g></svg>
<div class="t" style="left:59.8px;top:290.8px;font-size:16px;letter-spacing:-0.42px;line-height:20px;color:#e2e2e2;">Resize Image</div>
<svg width="47" height="47" viewBox="0 0 47 47" style="left:4px;top:326.5px;overflow:hidden"><rect width="47" height="47" fill="#d6d6d0"/><rect x="30" y="8" width="17" height="39" fill="#56799f"/><path d="M9 5c4-2 9-1 11 2l6 1-1 4c2 3 1 7-2 9l-10 1c-4-2-6-5-5-9z" fill="#e9a52c"/><rect x="13" y="8" width="8" height="3" fill="#333"/><path d="M14 13c3-2 7-2 10 1l-1 7-7 1z" fill="#e8e4dc"/><path d="M8 22c5-2 11-2 15 1l3 15c-6 3-14 3-19 0z" fill="#b9343a"/><path d="M7 37c5 3 12 3 18 0l1 10h-19z" fill="#e9a52c"/></svg>
<div class="t" style="left:59.8px;top:340.8px;font-size:16px;letter-spacing:0.14px;line-height:20px;color:#f2f2f2;">Flood Fill</div>
</div>
<div class="abs" style="left:1962px;top:687px;width:19px;height:374px;background:#424242;"></div>
<div class="abs" style="left:1962.5px;top:688px;width:18px;height:18px;background:#4a4a4a;border:1px solid #3a3a3a;border-radius:2px"></div>
<div class="abs" style="left:1962.5px;top:1041px;width:18px;height:18.5px;background:#4a4a4a;border:1px solid #3a3a3a;border-radius:2px"></div>
<div class="abs" style="left:1962.5px;top:1003px;width:18px;height:35.5px;background:#4b4b4b;border:1px solid #3a3a3a;border-radius:2px"></div>
<svg width="10" height="6" viewBox="0 0 10 6" style="left:1966.5px;top:694px;"><path d="M0 6h10l-5-6z" fill="#a8a8a8"/></svg>
<svg width="10" height="6" viewBox="0 0 10 6" style="left:1966.5px;top:1047px;"><path d="M0 0h10l-5 6z" fill="#a8a8a8"/></svg>
<svg width="22.5" height="22.5" viewBox="0 0 22.5 22.5" style="left:27.5px;top:1072.5px;"><rect x="1" y="1" width="20.500" height="20.500" fill="#3e3e3e" stroke="#dcdcdc" stroke-width="1.600"/><circle cx="11.250" cy="11.250" r="6" fill="none" stroke="#dcdcdc" stroke-width="1.500" stroke-dasharray="1.500 1.640"/></svg>
<div class="t" style="left:72px;top:1076.3px;font-size:16px;letter-spacing:0.89px;line-height:20px;color:#dedede;">Default Linework</div>
<div class="t" style="left:392.5px;top:1076.3px;font-size:16px;letter-spacing:0.71px;line-height:20px;color:#dedede;white-space:pre;">RGB/Alpha (8-bit integer/ch…)  sRGB-elle-V2-srgbtrc.icc</div>
<div class="abs" style="left:1282.5px;top:1070px;width:205.5px;height:31px;background:#434343;border:1px solid #3a3a3a;border-radius:3px"></div>
<div class="abs" style="left:1284.5px;top:1073px;width:1.5px;height:25px;background:#56799f;"></div>
<div class="t" style="left:1287.500px;top:1075.500px;font-size:16.500px;letter-spacing:-0.080px;line-height:20px;color:#dedede">3,558 <u style="text-underline-offset:2px">x</u> 3,758 (257.8 MiB)</div>
<div class="abs" style="left:1498.4px;top:1071.5px;width:28.4px;height:28.4px;background:#3a3a3a;border-radius:50%"></div>
<svg width="24" height="10" viewBox="0 0 24 10" style="left:1508px;top:1081px;"><path d="M4.600 4.700h16.500" stroke="#e4e4e4" stroke-width="1.600"/><circle cx="4.600" cy="4.700" r="2" fill="#e8e8e8"/><path d="M21 2.800v3.800" stroke="#cfcfcf" stroke-width="1.400"/></svg>
<div class="t" style="left:1542.5px;top:1076.3px;font-size:16px;letter-spacing:0.99px;line-height:20px;color:#cfcfcf;">0.00°</div>
<div class="t" style="left:1750px;top:1076.3px;font-size:16px;letter-spacing:0.78px;line-height:20px;color:#c8c8c8;">12.5%</div>
<div class="abs" style="left:1825px;top:1083.5px;width:125px;height:3px;background:#3a3a3a;border-radius:2px"></div>
<div class="abs" style="left:1825px;top:1083px;width:17px;height:4px;background:#56799f;border-radius:2px"></div>
<div class="abs" style="left:1840px;top:1077px;width:15.5px;height:17px;background:#505050;border:1px solid #363636;border-radius:3px"></div>
<svg width="24" height="19" viewBox="0 0 24 19" style="left:1951.5px;top:1076.5px;"><rect x="1" y="1" width="22" height="13.500" fill="none" stroke="#dcdcdc" stroke-width="1.700"/><path d="M12 14.500v3.500M6.500 18.200h11" stroke="#dcdcdc" stroke-width="1.700"/><circle cx="12" cy="7.500" r="1.600" fill="#dcdcdc"/></svg>
<div class="t" style="left:1525px;top:1056px;font-size:47px;line-height:56px;font-weight:700;letter-spacing:0;color:#060606;opacity:.24;-webkit-text-stroke:1.800px #060606;font-family:'DejaVu Sans','Liberation Sans',sans-serif;transform:scaleX(.915);transform-origin:0 50%">madebyromeo</div>
</div><!-- /w -->
</div><!-- /win -->
</body>
</html>
